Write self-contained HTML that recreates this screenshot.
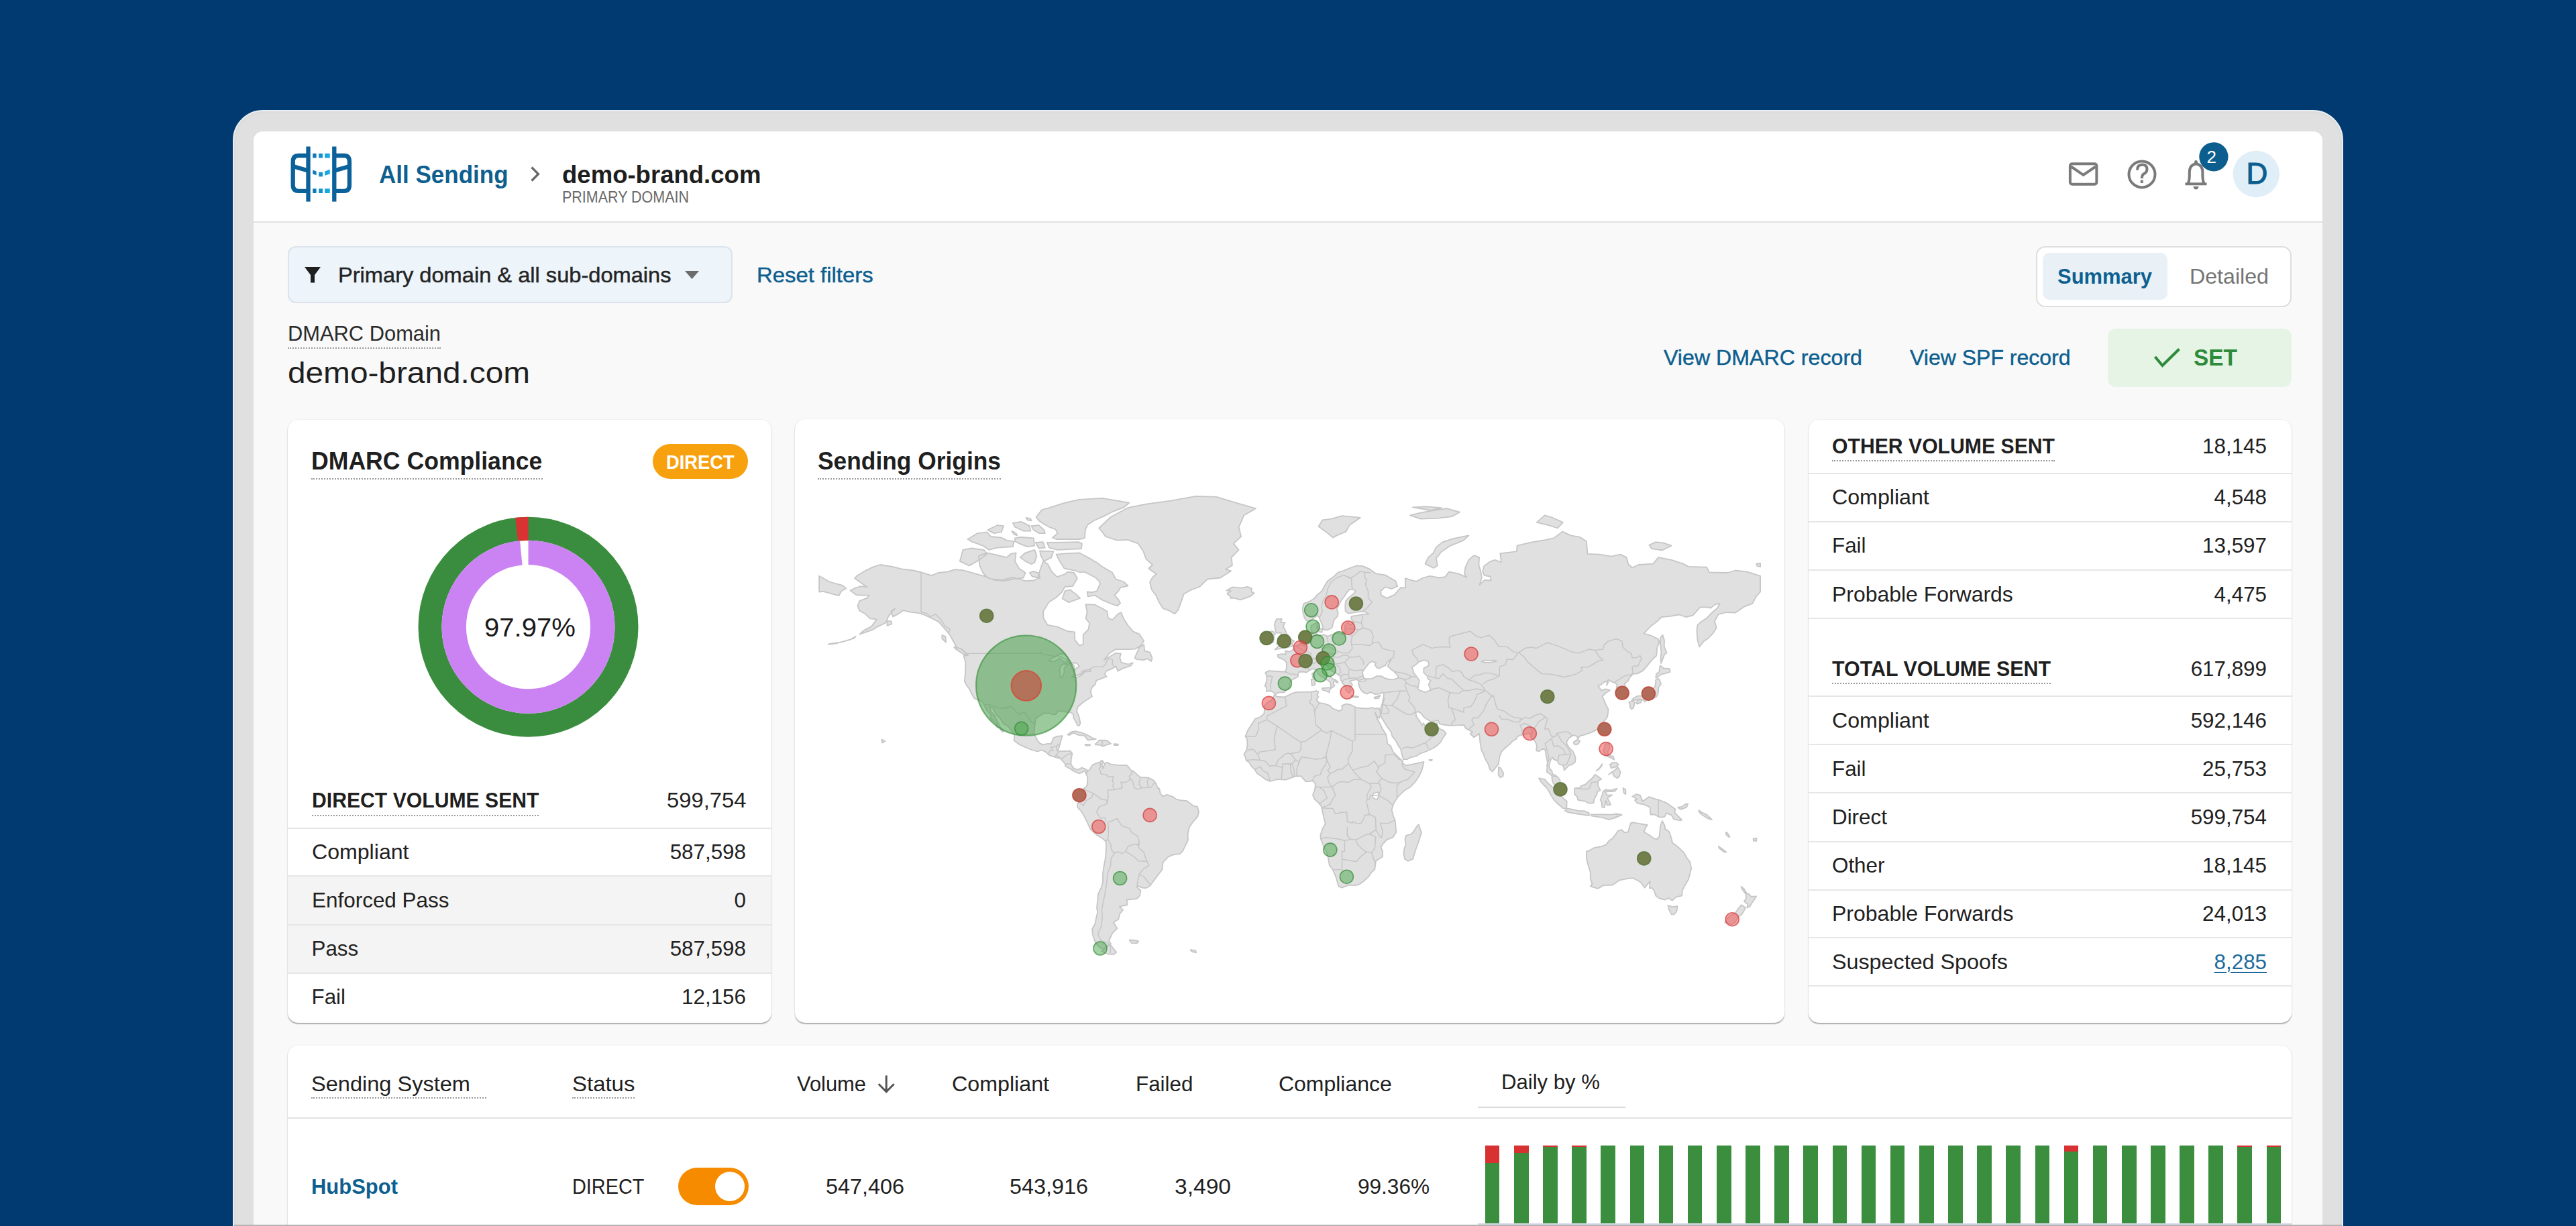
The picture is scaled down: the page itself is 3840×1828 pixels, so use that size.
<!DOCTYPE html>
<html><head><meta charset="utf-8"><style>
html,body{margin:0;padding:0}
body{width:3840px;height:1828px;overflow:hidden;position:relative;background:#003a70;font-family:"Liberation Sans",sans-serif}
.a{position:absolute;box-sizing:border-box}
.t{position:absolute;white-space:nowrap;line-height:0;transform-origin:0 0;font-family:"Liberation Sans",sans-serif}
.dot{position:absolute;height:0;border-top:2px dotted #9a9a9a}
.card{position:absolute;background:#fff;border-radius:15px;box-shadow:0 1.5px 1.5px rgba(0,0,0,.3),0 0 2px rgba(0,0,0,.08)}
.sep{position:absolute;height:2px;background:#e6e6e6}

</style></head><body>
<div class="a" style="left:346.5px;top:164px;width:3146.5px;height:1800px;background:#e0e0e0;border-radius:45px;border:2px solid #e9edf2;box-shadow:inset 0 0 0 3px #dcdcdc"></div>
<div class="a" style="left:378px;top:195.5px;width:3084px;height:1700px;background:#f9f9f9;border-radius:14px 14px 0 0"></div>
<div class="a" style="left:378px;top:195.5px;width:3084px;height:136.5px;background:#fff;border-radius:14px 14px 0 0;border-bottom:2px solid #e2e2e2"></div>
<!-- logo -->
<svg class="a" style="left:420px;top:205px" width="120" height="110" viewBox="420 205 120 110">
 <g fill="none" stroke="#0b6199" stroke-width="6.3">
  <line x1="459.5" y1="218.5" x2="459.5" y2="300.6"/>
  <line x1="498.3" y1="218.5" x2="498.3" y2="300.6"/>
  <path d="M459.5 232 H445 Q436.7 232 436.7 241 V276 Q436.7 284.8 445 284.8 H459.5"/>
  <path d="M498.3 232 H513 Q520.9 232 520.9 241 V276 Q520.9 284.8 513 284.8 H498.3"/>
  <path d="M437 248 L459.5 254.5"/>
  <path d="M498.3 254.5 L520.9 248"/>
 </g>
 <defs><linearGradient id="lg" x1="466" x2="492" y1="0" y2="0" gradientUnits="userSpaceOnUse"><stop offset="0" stop-color="#0d73b3"/><stop offset="1" stop-color="#17b2ea"/></linearGradient></defs>
 <g fill="url(#lg)">
  <rect x="466.2" y="228.8" width="5.4" height="6.7"/><rect x="475.2" y="228.8" width="5.8" height="6.7"/><rect x="484.2" y="228.8" width="7.6" height="6.7"/>
  <rect x="466.2" y="281.3" width="5.4" height="6.7"/><rect x="475.2" y="281.3" width="5.8" height="6.7"/><rect x="484.2" y="281.3" width="7.6" height="6.7"/>
  <path d="M466.2 253.5 L471.6 255.5 V261.3 L466.2 259.3Z"/>
  <path d="M475.2 256.7 L481 256.7 V263.3 L475.2 263.3Z"/>
  <path d="M484.2 255.5 L491.8 252.6 V259.3 L484.2 261.8Z"/>
 </g>
</svg>
<!-- chevron -->
<svg class="a" style="left:785px;top:240px" width="30" height="40" viewBox="785 240 30 40">
 <path d="M792.5 249.5 L802.5 259.5 L792.5 269.5" fill="none" stroke="#666" stroke-width="3.2"/>
</svg>
<!-- header icons -->
<svg class="a" style="left:3070px;top:205px" width="350" height="100" viewBox="3070 205 350 100">
 <g fill="none" stroke="#7a7a7a" stroke-width="4">
  <rect x="3085.9" y="244.3" width="39.5" height="30.4" rx="3"/>
  <path d="M3087.5 248.5 L3105.6 260.8 L3123.8 248.5"/>
  <circle cx="3193" cy="259.9" r="19.5"/>
  <path d="M3186 253.5 Q3186 245.5 3193.5 245.5 Q3200.5 245.5 3200.5 252.5 Q3200.5 257 3195.5 259.5 Q3192.8 261.2 3192.8 266"/>
  <path d="M3257.5 274.3 H3289.5 M3261.2 274.3 Q3263.8 270 3263.8 262 V257 Q3263.8 245.5 3273.6 244.2 Q3283.4 245.5 3283.4 257 V262 Q3283.4 270 3286 274.3"/>
 </g>
 <rect x="3190.8" y="268.5" width="4" height="4.5" fill="#7a7a7a"/>
 <path d="M3269.5 278 H3277.5 Q3277 282.5 3273.5 282.5 Q3270 282.5 3269.5 278Z" fill="#7a7a7a"/>
 <circle cx="3273.5" cy="241.5" r="2.5" fill="#7a7a7a"/>
 <circle cx="3299.9" cy="233.8" r="21.6" fill="#0b5e8e"/>
 <circle cx="3363.3" cy="259.5" r="34.7" fill="#e0eef7"/>
</svg>
<span class="t" style="left:3289.5px;top:233.8px;font-size:26px;color:#fff;transform:none;line-height:0">2</span>
<span class="t" style="left:3348.5px;top:259px;font-size:44px;color:#0b5e8e;transform:none;line-height:0;-webkit-text-stroke:1.1px #0b5e8e">D</span>
<!-- filter box -->
<div class="a" style="left:429px;top:366.5px;width:663px;height:85.5px;background:#edf4fa;border:2px solid #dbe4ec;border-radius:12px"></div>
<svg class="a" style="left:440px;top:390px" width="50" height="40" viewBox="440 390 50 40">
 <path d="M454 398 H478 L469 410 V421.6 H463 V410 Z" fill="#1f1f1f"/>
</svg>
<svg class="a" style="left:1015px;top:398px" width="35" height="25" viewBox="1015 398 35 25">
 <path d="M1021 404 H1042 L1031.5 416 Z" fill="#6b6b6b"/>
</svg>
<!-- toggle group -->
<div class="a" style="left:3034.6px;top:367px;width:381px;height:91px;background:#fff;border:2px solid #dedede;border-radius:14px"></div>
<div class="a" style="left:3045px;top:377px;width:186px;height:70px;background:#e9f1f7;border-radius:10px"></div>
<!-- SET -->
<div class="a" style="left:3141.5px;top:490px;width:274px;height:86.5px;background:#e6f4e6;border-radius:12px"></div>
<svg class="a" style="left:3200px;top:510px" width="60" height="45" viewBox="3200 510 60 45">
 <path d="M3212.5 532 L3223.5 545 L3248.5 520.5" fill="none" stroke="#2e8b3b" stroke-width="4.2"/>
</svg>
<!-- dotted underlines -->
<div class="dot" style="left:429px;top:518px;width:228px"></div>
<!-- cards -->
<div class="card" style="left:428.5px;top:625.5px;width:721px;height:899px"></div>
<div class="card" style="left:1185px;top:625px;width:1475px;height:899.5px"></div>
<div class="card" style="left:2696px;top:626px;width:720px;height:898.5px"></div>
<div class="card" style="left:428.5px;top:1559px;width:2987.5px;height:400px"></div>
<div class="dot" style="left:463.5px;top:713px;width:345px"></div>
<div class="dot" style="left:1219px;top:713px;width:273px"></div>
<!-- DIRECT badge -->
<div class="a" style="left:973.4px;top:662px;width:141.2px;height:52px;background:#f8a10f;border-radius:26px"></div>
<!-- donut -->
<svg class="a" style="left:600px;top:750px" width="380" height="370" viewBox="600 750 380 370">
 <circle cx="787.5" cy="934.7" r="146.5" fill="none" stroke="#3a8d3e" stroke-width="35"/>
 <path d="M787.5 770.7 L787.5 805.7 L772.0 806.6 L768.2 771.8 Z" fill="#d83232"/>
 <g transform="rotate(-90 787.5 934.7)"><circle cx="787.5" cy="934.7" r="110.8" fill="none" stroke="#cb83f4" stroke-width="36.4" stroke-dasharray="684.6 11.6"/></g>
</svg>
<!-- dmarc rows -->
<div class="a" style="left:428.5px;top:1306px;width:721px;height:145px;background:#f4f4f4"></div>
<div class="sep" style="left:428.5px;top:1234px;width:721px"></div>
<div class="sep" style="left:428.5px;top:1305px;width:721px"></div>
<div class="sep" style="left:428.5px;top:1377.5px;width:721px"></div>
<div class="sep" style="left:428.5px;top:1450px;width:721px"></div>
<div class="dot" style="left:464.5px;top:1215px;width:338.5px"></div>
<!-- right card separators -->
<div class="sep" style="left:2696px;top:705px;width:720px"></div>
<div class="sep" style="left:2696px;top:777px;width:720px"></div>
<div class="sep" style="left:2696px;top:849px;width:720px"></div>
<div class="sep" style="left:2696px;top:921px;width:720px"></div>
<div class="sep" style="left:2696px;top:1036.5px;width:720px"></div>
<div class="sep" style="left:2696px;top:1109px;width:720px"></div>
<div class="sep" style="left:2696px;top:1181px;width:720px"></div>
<div class="sep" style="left:2696px;top:1253.5px;width:720px"></div>
<div class="sep" style="left:2696px;top:1325.5px;width:720px"></div>
<div class="sep" style="left:2696px;top:1397px;width:720px"></div>
<div class="sep" style="left:2696px;top:1469px;width:720px"></div>
<div class="dot" style="left:2731px;top:685.5px;width:332px"></div>
<div class="dot" style="left:2731px;top:1017.5px;width:326px"></div>
<!-- map -->
<svg class="a" style="left:1200px;top:720px" width="1440" height="730" viewBox="1200 720 1440 730">
<path d="M1267.5 880.6L1274.9 876.7L1283.5 874.1L1292.5 875.4L1284.3 869.5L1274.1 862.2L1277.3 858.8L1289.3 851.2L1301.0 845.6L1311.6 842.0L1330.3 844.9L1343.9 848.4L1361.4 850.5L1373.1 853.3L1388.7 858.1L1398.5 854.0L1412.1 852.6L1423.8 849.1L1436.6 850.5L1451.1 854.7L1466.7 858.8L1478.3 863.5L1493.9 864.9L1509.5 860.8L1529.0 866.2L1540.7 865.5L1546.5 862.8L1550.4 849.8L1555.1 836.9L1562.1 841.3L1568.0 852.6L1575.8 860.1L1587.5 856.0L1591.4 852.6L1601.1 854.0L1605.8 862.2L1599.1 874.1L1587.5 874.8L1582.8 883.1L1573.8 891.3L1563.3 898.1L1555.1 911.8L1555.5 921.7L1561.7 931.9L1576.5 934.6L1591.4 941.2L1601.9 942.3L1602.3 954.1L1608.9 962.4L1614.7 960.9L1614.7 946.1L1622.5 938.5L1624.1 929.1L1618.6 922.3L1620.6 912.4L1618.2 901.1L1632.3 901.7L1644.0 907.7L1650.6 911.8L1651.8 921.7L1658.4 924.0L1666.2 915.9L1671.2 913.0L1675.1 922.8L1681.8 933.0L1688.8 941.2L1698.5 945.6L1705.1 955.7L1701.3 961.9L1692.7 967.6L1681.0 968.1L1663.4 968.1L1654.5 973.2L1645.9 984.1L1663.4 973.7L1670.9 974.7L1669.3 980.2L1671.2 987.6L1681.8 990.5L1688.8 988.0L1686.1 992.4L1674.8 996.3L1666.2 1000.6L1663.8 993.4L1658.4 996.7L1649.0 1000.6L1646.7 1005.8L1649.8 1009.0L1644.0 1010.9L1634.2 1014.6L1632.7 1020.6L1628.4 1024.2L1625.6 1030.6L1628.0 1038.6L1620.6 1043.0L1614.0 1047.8L1606.9 1053.5L1605.0 1060.3L1608.5 1068.4L1610.5 1078.5L1608.9 1081.8L1606.6 1082.2L1603.8 1076.4L1600.3 1070.5L1599.9 1065.0L1596.0 1062.0L1589.4 1061.6L1581.6 1060.3L1577.7 1059.9L1573.8 1065.0L1569.9 1065.5L1564.1 1063.3L1556.3 1063.3L1550.4 1067.1L1543.8 1071.4L1543.0 1078.5L1541.9 1086.8L1541.5 1094.2L1546.5 1104.0L1550.4 1108.4L1554.3 1110.4L1562.1 1108.8L1566.8 1109.2L1570.3 1100.3L1575.8 1097.9L1583.6 1097.1L1581.2 1105.2L1578.9 1113.7L1576.5 1119.7L1585.5 1120.1L1595.3 1119.7L1598.4 1123.3L1596.8 1131.2L1596.4 1139.1L1599.9 1145.0L1606.2 1147.8L1612.8 1144.6L1619.4 1147.4L1621.8 1149.4L1619.0 1154.1L1617.1 1149.4L1609.3 1153.3L1601.1 1150.1L1596.4 1147.0L1588.2 1142.3L1587.5 1138.3L1580.8 1131.2L1573.4 1129.2L1564.9 1126.5L1558.2 1120.9L1553.2 1118.5L1546.5 1120.5L1538.7 1118.5L1529.0 1114.5L1519.3 1110.0L1511.5 1104.0L1512.2 1096.2L1509.5 1091.7L1501.7 1081.8L1495.9 1079.3L1490.8 1071.0L1485.0 1065.9L1481.1 1056.5L1475.2 1053.9L1476.4 1059.5L1482.2 1067.1L1485.4 1073.5L1488.1 1077.7L1492.0 1085.6L1496.3 1090.1L1493.9 1091.3L1490.0 1085.6L1485.4 1083.1L1485.4 1078.1L1481.5 1075.2L1476.8 1071.0L1477.2 1066.3L1471.3 1059.5L1467.4 1052.2L1465.5 1047.8L1460.8 1044.3L1452.6 1041.7L1447.6 1032.8L1445.2 1027.4L1440.9 1022.0L1437.8 1015.6L1439.0 1003.4L1439.4 988.0L1436.6 977.7L1443.3 977.2L1435.5 969.1L1425.7 965.0L1421.8 957.2L1415.2 945.6L1408.2 937.4L1399.6 927.4L1390.7 922.8L1379.0 917.1L1369.2 914.2L1355.6 912.4L1346.6 910.1L1338.0 915.9L1331.0 919.4L1328.3 911.8L1334.2 907.1L1324.4 918.8L1320.5 928.5L1308.8 934.1L1301.0 939.0L1291.3 942.3L1281.5 945.6L1287.4 940.1L1299.1 934.1L1306.9 923.4L1297.1 922.3L1290.1 915.3L1281.2 910.7L1278.4 903.5L1281.2 896.2L1293.2 891.3L1295.2 887.6L1285.4 887.6L1276.5 886.9L1267.5 880.6ZM1638.1 787.5L1655.7 771.0L1681.0 757.2L1708.3 751.6L1743.3 746.8L1782.3 739.9L1813.5 740.9L1838.8 748.7L1871.9 758.2L1854.4 768.3L1846.6 785.8L1850.1 800.0L1838.8 810.4L1846.6 819.8L1835.7 831.1L1836.9 842.7L1827.1 849.1L1834.9 851.2L1819.3 861.5L1799.8 863.5L1788.2 874.8L1774.5 879.9L1764.8 885.7L1760.9 896.9L1755.8 910.1L1751.1 915.3L1743.3 910.7L1733.6 907.1L1727.8 898.1L1723.9 888.8L1716.8 879.3L1714.1 868.2L1718.0 860.8L1723.9 856.0L1712.2 847.7L1718.0 842.0L1708.3 833.3L1704.4 822.1L1696.6 810.4L1681.0 804.9L1665.4 805.7L1647.9 800.0L1644.0 794.2L1638.1 787.5ZM1681.4 873.5L1675.1 867.5L1663.4 863.5L1657.6 853.3L1644.0 845.6L1636.2 839.8L1624.5 832.6L1608.9 824.3L1591.4 825.1L1574.6 826.6L1578.9 835.5L1586.7 847.7L1601.5 850.5L1610.1 853.3L1616.7 852.6L1624.5 856.7L1632.3 860.8L1638.1 866.2L1640.1 870.2L1635.0 881.2L1628.4 883.1L1620.6 882.5L1621.8 889.4L1632.3 887.6L1642.8 894.4L1655.7 899.9L1665.4 903.5L1670.1 899.3L1667.3 893.8L1661.5 887.6L1667.3 881.2L1670.1 876.1L1681.4 873.5ZM1458.9 828.8L1471.3 824.3L1485.0 827.3L1500.6 831.1L1506.8 825.8L1514.6 824.3L1513.0 836.9L1519.3 847.7L1528.6 854.0L1525.5 861.5L1509.9 863.5L1497.4 866.2L1481.8 864.9L1472.5 861.5L1465.1 854.0L1460.4 843.4ZM1430.8 836.9L1435.5 819.8L1447.9 817.5L1466.7 819.8L1471.3 825.8L1458.9 835.5L1444.8 843.4ZM1544.6 771.0L1553.2 760.0L1564.1 757.2L1587.5 749.7L1608.9 744.8L1643.2 742.9L1683.3 749.7L1675.5 756.3L1658.8 762.8L1644.7 770.1L1630.7 776.3L1621.4 782.4L1618.2 789.2L1616.7 802.4L1608.9 804.0L1575.0 804.0L1568.8 801.6L1576.5 795.1L1573.4 789.2L1564.1 785.8L1556.3 781.5L1548.5 776.3ZM1561.0 808.8L1575.0 808.8L1607.3 808.1L1612.8 810.4L1612.0 818.2L1576.5 819.8L1564.1 816.7ZM1550.0 821.3L1570.3 822.1L1567.2 831.1L1556.3 836.9L1551.6 828.8ZM1520.8 831.1L1528.6 824.3L1542.3 819.8L1545.4 828.8L1542.3 838.4L1537.6 841.3L1528.6 836.9ZM1442.5 804.0L1457.3 795.1L1471.3 793.4L1477.2 800.0L1492.8 801.6L1500.6 805.7L1511.5 807.3L1509.9 815.1L1486.5 816.7L1474.1 819.8L1465.1 813.6L1447.9 807.3ZM1472.5 790.1L1486.5 783.2L1495.9 784.1L1492.8 793.4L1481.8 795.1ZM1513.0 802.4L1520.8 800.8L1531.7 801.6L1540.7 802.4L1542.3 813.6L1531.7 815.1L1519.3 810.4L1513.0 807.3ZM1543.8 808.8L1554.7 808.1L1557.8 816.7L1548.5 817.5ZM1509.9 779.8L1522.4 778.0L1534.8 784.1L1536.4 791.7L1525.5 791.7L1513.0 785.8ZM1537.6 784.1L1548.5 783.2L1556.3 790.1L1557.8 795.1L1548.5 795.1L1540.7 790.1ZM1529.4 771.9L1536.4 773.6L1537.6 776.3L1531.7 775.4ZM1508.3 791.7L1514.6 795.1L1516.1 798.4L1511.5 796.7ZM1610.1 891.9L1593.3 898.1L1583.6 892.5L1587.5 881.2L1595.3 879.3L1605.0 886.9ZM1550.4 862.2L1538.7 859.5L1534.8 854.0L1540.7 851.9L1548.5 854.7ZM1691.5 981.2L1698.5 965.0L1705.1 960.9L1706.3 970.6L1714.1 972.7L1717.6 981.2L1716.1 986.1L1710.2 982.1L1704.4 984.1L1694.6 983.1ZM1591.5 1095.5L1597.2 1091.3L1603.0 1090.1L1612.8 1092.6L1620.6 1095.8L1628.4 1100.3L1633.7 1102.2L1621.8 1103.6L1616.7 1097.1L1606.9 1095.8L1599.9 1092.6L1594.1 1096.2ZM1632.5 1109.6L1638.9 1103.6L1649.8 1104.0L1656.0 1108.8L1649.8 1110.4L1644.0 1112.9L1640.1 1110.8L1633.1 1110.4ZM1617.5 1110.0L1625.3 1110.4L1624.5 1111.7L1618.6 1111.7ZM1660.7 1109.2L1667.0 1109.6L1666.6 1111.2L1660.7 1111.2ZM1621.8 1149.4L1623.7 1148.2L1628.0 1141.1L1633.4 1138.3L1640.1 1136.0L1642.4 1133.6L1645.1 1136.4L1642.4 1139.9L1644.0 1146.2L1647.1 1137.9L1650.6 1136.8L1656.4 1139.9L1665.4 1140.7L1673.2 1141.1L1679.0 1140.7L1681.8 1143.1L1685.7 1148.6L1689.6 1149.8L1695.8 1155.6L1699.7 1158.8L1706.3 1159.2L1712.6 1159.9L1720.0 1163.9L1723.1 1168.2L1725.8 1174.8L1728.1 1175.6L1729.7 1183.0L1733.6 1187.3L1739.4 1184.9L1749.2 1188.4L1753.1 1191.6L1760.9 1193.5L1768.7 1193.9L1772.6 1196.6L1778.4 1201.3L1785.0 1202.9L1787.0 1210.3L1785.4 1217.4L1778.4 1225.3L1772.6 1234.0L1770.6 1243.1L1771.0 1252.3L1767.9 1259.2L1763.2 1268.6L1758.9 1273.1L1749.2 1274.3L1741.4 1277.6L1733.6 1285.9L1732.4 1296.8L1725.4 1305.8L1718.0 1315.7L1714.1 1321.0L1708.7 1324.0L1702.4 1323.6L1695.4 1320.5L1695.0 1322.7L1700.5 1328.0L1698.9 1335.6L1694.6 1340.2L1679.8 1341.5L1680.2 1349.3L1668.9 1351.6L1674.0 1356.8L1669.3 1362.4L1667.3 1370.5L1659.9 1375.4L1665.4 1384.2L1658.4 1391.2L1655.7 1396.8L1652.9 1403.0L1656.0 1407.2L1651.8 1408.7L1645.9 1415.1L1640.1 1413.5L1633.4 1406.6L1629.2 1395.3L1628.0 1385.2L1632.3 1377.8L1634.2 1368.1L1636.2 1360.0L1635.0 1354.0L1636.2 1342.4L1636.9 1333.4L1641.2 1324.5L1644.0 1315.7L1644.0 1302.8L1645.1 1294.3L1647.5 1281.7L1648.3 1273.5L1649.0 1263.3L1648.6 1254.8L1644.0 1250.7L1635.0 1245.1L1625.3 1236.4L1621.8 1228.4L1615.5 1215.4L1611.6 1209.5L1606.2 1203.7L1605.8 1199.0L1609.7 1195.5L1611.6 1192.3L1607.3 1189.2L1608.9 1183.8L1610.8 1178.7L1615.1 1176.3L1620.2 1172.1L1621.0 1166.2L1621.4 1158.8L1619.0 1154.1ZM1655.3 1408.7L1664.2 1419.9L1659.6 1423.2L1651.8 1422.6L1642.0 1418.3L1647.9 1413.0ZM1899.6 1036.4L1905.1 1039.0L1914.8 1039.5L1926.5 1033.7L1934.3 1031.9L1944.0 1031.9L1955.7 1031.5L1962.3 1030.1L1965.5 1031.5L1963.5 1036.4L1965.5 1039.0L1962.3 1043.4L1966.2 1047.8L1974.0 1049.1L1982.2 1052.2L1986.9 1056.5L1996.6 1060.3L2000.9 1057.3L2000.2 1052.2L2006.4 1049.6L2012.2 1050.4L2018.1 1053.0L2020.8 1054.8L2029.8 1056.0L2039.1 1056.5L2045.4 1055.2L2048.5 1056.5L2055.9 1056.0L2058.6 1063.8L2055.9 1071.0L2053.1 1068.8L2049.6 1062.0L2053.1 1072.2L2057.0 1078.5L2060.9 1086.8L2066.0 1095.0L2067.6 1103.2L2068.3 1109.2L2073.0 1112.1L2076.5 1120.9L2082.4 1126.9L2087.4 1131.6L2091.3 1135.6L2090.2 1137.9L2096.4 1141.5L2103.8 1139.9L2113.6 1137.9L2122.5 1136.0L2121.3 1141.5L2119.4 1149.0L2115.5 1156.8L2109.7 1165.8L2102.6 1173.2L2094.1 1178.3L2086.3 1185.3L2081.6 1191.2L2076.9 1199.4L2074.6 1207.6L2076.5 1215.4L2079.6 1223.3L2080.4 1231.2L2081.2 1241.1L2076.5 1248.3L2066.8 1252.3L2060.9 1259.2L2058.6 1263.3L2060.9 1269.4L2060.9 1277.6L2051.2 1283.4L2050.4 1288.0L2049.3 1296.4L2044.2 1301.1L2039.5 1307.9L2031.7 1314.8L2025.9 1318.8L2020.0 1320.1L2010.3 1319.6L2000.5 1323.6L1995.1 1321.4L1993.9 1316.6L1992.0 1309.2L1986.9 1296.8L1981.8 1290.1L1980.3 1281.7L1978.7 1272.7L1974.0 1263.3L1968.6 1250.3L1968.6 1244.3L1971.7 1235.2L1975.6 1228.4L1973.7 1220.1L1970.5 1206.0L1969.4 1201.7L1965.9 1197.4L1959.6 1191.6L1956.9 1185.3L1959.2 1180.2L1960.8 1172.4L1960.4 1167.4L1956.5 1164.2L1951.8 1165.0L1946.8 1165.4L1942.1 1160.3L1939.0 1157.2L1930.4 1157.6L1926.5 1159.2L1916.8 1162.7L1910.9 1162.3L1905.1 1161.9L1893.4 1165.0L1887.5 1162.7L1880.5 1157.6L1873.9 1153.3L1870.8 1147.8L1864.9 1141.9L1862.6 1137.2L1857.5 1133.6L1856.7 1129.2L1854.4 1124.5L1858.3 1118.5L1859.5 1111.2L1859.1 1102.4L1856.4 1097.9L1860.2 1088.9L1866.1 1079.7L1871.2 1071.8L1878.2 1069.3L1884.4 1063.8L1884.8 1059.1L1884.4 1053.0L1889.1 1047.4L1895.7 1043.9L1898.4 1039.0ZM2114.7 1229.2L2119.0 1241.9L2116.7 1248.3L2114.7 1255.2L2111.6 1263.3L2108.9 1271.4L2106.1 1280.9L2098.7 1283.8L2094.1 1280.9L2092.5 1273.5L2093.3 1265.3L2095.6 1259.2L2094.5 1251.1L2096.0 1245.9L2103.8 1243.5L2107.7 1239.1L2110.4 1234.4ZM1900.8 1035.5L1898.0 1031.9L1893.4 1030.1L1887.9 1031.0L1888.3 1025.2L1885.6 1022.9L1888.3 1015.1L1888.3 1008.1L1886.4 1002.9L1891.4 1000.1L1903.1 1001.0L1910.9 1001.5L1916.4 1001.5L1917.9 995.3L1917.9 988.0L1914.0 983.6L1905.5 980.2L1904.3 976.2L1910.9 975.2L1916.8 975.7L1916.0 970.6L1923.4 971.6L1928.8 967.6L1929.2 964.0L1935.1 961.9L1939.7 957.8L1941.7 953.0L1949.1 950.9L1955.7 950.4L1956.9 945.6L1954.6 940.1L1954.2 933.0L1963.9 927.9L1962.7 936.3L1965.1 940.1L1961.6 943.4L1965.5 948.2L1973.3 946.1L1979.1 948.8L1986.9 945.6L1994.7 943.9L1998.6 946.1L2005.2 941.8L2004.4 933.0L2008.3 928.5L2014.2 931.9L2017.7 927.4L2014.2 922.8L2014.6 918.8L2023.9 917.7L2033.7 915.9L2040.3 915.3L2033.7 911.8L2023.9 912.4L2010.3 914.8L2005.6 911.2L2005.2 904.1L2006.0 896.2L2010.3 891.3L2017.3 885.7L2020.8 881.9L2018.5 879.3L2012.2 878.7L2008.3 882.5L2004.4 888.8L1999.8 894.4L1996.3 901.1L1992.7 908.9L1994.7 913.6L1993.9 918.8L1988.8 924.0L1986.9 930.7L1985.7 935.7L1979.1 939.6L1972.5 938.5L1971.3 931.9L1968.2 925.1L1966.2 920.0L1963.5 917.7L1959.6 920.5L1953.8 925.7L1947.9 925.7L1944.4 921.1L1942.1 912.4L1942.1 905.3L1943.6 899.9L1951.8 896.9L1959.6 891.9L1963.5 886.9L1970.5 881.2L1975.2 872.8L1979.1 866.2L1986.9 860.8L1994.7 853.3L2002.5 851.2L2012.2 847.0L2023.1 843.4L2031.7 844.1L2041.5 848.4L2051.2 855.4L2064.8 857.4L2080.4 866.2L2083.2 874.1L2074.6 878.0L2064.8 875.4L2058.2 881.2L2059.0 887.6L2067.6 891.9L2078.5 886.9L2088.2 876.1L2094.8 876.7L2094.8 862.2L2103.0 864.9L2111.6 866.9L2121.3 861.5L2131.9 858.8L2144.7 861.5L2154.5 860.1L2159.9 852.6L2174.0 855.4L2186.4 860.8L2182.9 855.4L2184.5 845.6L2189.5 834.8L2197.3 828.1L2205.1 831.1L2204.4 842.7L2207.1 851.2L2209.0 860.8L2205.5 872.2L2212.9 864.9L2222.7 865.5L2221.5 859.5L2212.9 858.1L2210.2 852.6L2212.1 844.1L2220.7 837.7L2228.5 834.8L2237.9 838.4L2236.3 825.1L2249.9 823.6L2260.9 822.1L2261.6 813.6L2281.1 808.8L2304.5 804.9L2316.2 802.4L2329.1 792.6L2341.5 798.4L2355.2 800.8L2364.9 807.3L2366.5 825.8L2384.4 826.6L2401.9 829.6L2415.6 826.6L2424.5 831.1L2427.3 841.3L2433.1 846.3L2442.8 842.0L2464.3 840.6L2472.1 831.1L2491.6 834.8L2509.1 840.6L2516.9 844.9L2544.2 845.6L2548.1 853.3L2575.3 854.0L2587.0 850.5L2604.6 852.6L2624.1 858.8L2624.1 882.5L2618.2 888.8L2612.4 899.9L2599.9 904.7L2587.0 913.6L2573.4 913.0L2561.7 915.9L2555.9 926.2L2558.6 936.3L2553.9 943.9L2546.1 952.0L2540.3 955.7L2533.3 964.5L2530.5 954.6L2529.4 940.1L2530.5 931.9L2536.4 926.8L2544.2 921.7L2552.7 913.0L2560.1 906.5L2563.7 899.9L2557.0 901.1L2550.0 906.5L2544.2 905.3L2534.4 905.3L2523.5 917.7L2513.0 920.0L2503.3 916.5L2489.6 918.8L2476.8 920.0L2470.5 926.2L2460.4 934.1L2450.6 944.5L2462.3 948.2L2471.3 952.5L2473.6 957.2L2470.1 966.0L2469.3 977.7L2462.3 984.1L2456.5 991.4L2449.5 999.6L2440.9 1004.4L2434.3 1004.8L2429.2 1010.4L2427.7 1014.2L2421.4 1019.7L2426.1 1028.8L2426.9 1036.4L2426.1 1039.5L2419.5 1041.7L2415.6 1042.6L2414.8 1036.4L2416.3 1031.0L2414.0 1027.4L2409.7 1025.6L2410.5 1020.6L2407.4 1018.3L2400.0 1015.1L2397.3 1013.2L2394.9 1022.0L2397.6 1016.9L2392.2 1016.0L2386.3 1021.1L2382.4 1022.4L2387.1 1029.7L2393.4 1027.4L2400.0 1029.2L2394.1 1032.8L2388.3 1038.6L2391.0 1043.4L2393.7 1050.4L2397.6 1057.8L2396.9 1063.8L2396.1 1068.8L2391.4 1075.2L2388.3 1080.6L2384.4 1084.3L2378.5 1088.9L2371.9 1092.1L2366.9 1093.8L2361.0 1095.8L2355.2 1097.1L2352.4 1101.5L2350.1 1097.5L2345.4 1096.2L2338.4 1100.7L2334.9 1107.2L2338.4 1114.1L2345.4 1121.3L2348.5 1129.2L2348.2 1136.0L2343.5 1139.9L2338.4 1141.5L2331.8 1148.6L2331.0 1143.9L2329.8 1141.1L2324.0 1139.5L2321.7 1134.4L2316.2 1132.4L2314.2 1129.2L2311.9 1132.0L2309.2 1141.1L2310.4 1146.2L2313.5 1149.8L2314.2 1154.1L2318.1 1155.6L2321.3 1158.0L2325.5 1163.1L2325.9 1170.5L2329.1 1176.0L2325.9 1177.1L2322.0 1174.8L2317.8 1171.3L2315.0 1167.0L2313.5 1161.1L2313.5 1156.8L2309.6 1153.3L2305.7 1150.9L2306.5 1143.9L2306.8 1136.0L2304.5 1125.3L2303.3 1117.3L2298.7 1116.9L2294.4 1120.1L2290.1 1119.3L2290.9 1111.7L2288.9 1106.4L2286.2 1102.4L2282.3 1099.9L2280.3 1093.0L2275.3 1094.2L2271.4 1095.8L2267.5 1095.8L2261.6 1098.3L2260.9 1101.5L2254.6 1105.2L2249.9 1110.4L2243.3 1115.7L2238.6 1120.5L2235.1 1129.2L2234.0 1139.1L2231.2 1142.3L2227.3 1147.4L2224.6 1150.5L2221.1 1147.4L2218.0 1138.3L2214.1 1132.0L2211.4 1124.1L2208.6 1119.3L2206.3 1106.4L2205.5 1097.5L2205.1 1093.8L2197.3 1099.5L2191.5 1093.8L2195.4 1091.3L2189.5 1088.4L2184.9 1086.0L2182.5 1081.0L2172.0 1081.4L2162.7 1081.8L2154.5 1081.0L2145.9 1079.3L2143.9 1073.9L2138.9 1075.2L2133.0 1076.0L2127.2 1072.2L2122.5 1069.3L2118.6 1063.8L2114.7 1061.2L2110.4 1062.0L2111.2 1068.0L2114.7 1073.1L2118.2 1077.7L2119.4 1081.8L2122.1 1078.1L2123.7 1081.4L2123.7 1085.6L2129.1 1086.0L2135.0 1085.6L2139.7 1080.6L2142.0 1077.2L2142.8 1083.5L2146.7 1087.2L2151.7 1088.9L2155.6 1093.4L2150.6 1101.1L2147.5 1106.4L2142.8 1111.2L2136.9 1115.3L2126.0 1120.5L2117.4 1123.3L2111.6 1127.2L2101.9 1129.6L2098.0 1132.0L2092.1 1132.4L2089.0 1122.1L2088.2 1117.3L2084.3 1111.2L2080.4 1104.0L2075.4 1097.9L2073.8 1091.7L2068.7 1084.7L2064.8 1078.5L2059.8 1070.5L2057.4 1063.8L2058.6 1055.6L2060.9 1047.4L2062.5 1039.5L2062.9 1033.3L2060.9 1032.4L2055.9 1034.6L2049.3 1035.0L2043.4 1031.9L2037.6 1034.6L2031.7 1031.9L2029.0 1028.8L2026.6 1024.7L2025.9 1020.6L2024.7 1016.9L2029.8 1015.6L2035.6 1015.1L2036.4 1012.3L2045.4 1011.8L2052.4 1008.1L2059.0 1008.1L2064.8 1011.4L2071.9 1013.2L2078.5 1012.8L2084.3 1010.9L2084.3 1008.1L2077.7 1001.0L2072.6 997.2L2068.3 992.9L2070.7 989.0L2073.8 983.1L2068.7 986.6L2064.8 992.4L2060.9 993.9L2057.0 996.3L2052.8 995.8L2049.6 991.4L2051.2 988.5L2045.4 986.1L2041.5 988.0L2038.0 992.4L2034.1 997.2L2030.9 1002.0L2031.7 1005.8L2032.5 1010.4L2035.6 1012.1L2029.8 1013.2L2025.1 1014.6L2022.0 1013.2L2016.9 1014.2L2012.2 1015.6L2016.1 1021.1L2012.2 1025.6L2014.2 1028.8L2011.5 1033.3L2008.3 1031.0L2005.6 1027.4L2006.4 1023.3L2002.1 1019.7L1998.6 1013.7L1998.6 1009.0L1994.7 1005.8L1988.8 1002.0L1984.2 999.6L1979.1 993.9L1975.6 990.5L1970.9 991.4L1970.5 996.3L1975.2 1000.6L1977.9 1006.2L1984.2 1009.0L1985.7 1011.8L1990.8 1013.7L1994.7 1016.9L1993.5 1018.3L1988.8 1015.1L1987.3 1018.8L1989.6 1022.0L1986.9 1024.7L1983.8 1026.5L1983.8 1022.4L1983.0 1017.4L1979.1 1014.2L1975.2 1011.4L1969.4 1008.6L1965.5 1005.3L1963.5 1002.0L1960.8 998.2L1956.1 997.2L1951.8 999.6L1947.9 1002.5L1942.1 1001.5L1936.2 1002.0L1934.7 1005.8L1935.1 1008.6L1930.4 1011.4L1925.7 1013.7L1922.6 1018.3L1921.4 1020.1L1923.4 1022.9L1920.3 1026.1L1919.1 1028.3L1915.6 1030.6L1914.0 1032.4L1909.0 1032.4L1905.1 1032.8ZM1900.4 968.6L1907.0 967.1L1912.9 966.0L1920.7 965.0L1928.1 963.0L1925.3 960.4L1929.2 955.7L1923.8 953.0L1923.0 950.4L1917.9 945.0L1916.0 939.6L1914.0 936.3L1912.9 933.0L1915.6 928.5L1909.0 927.9L1910.9 922.8L1903.1 922.8L1901.2 926.8L1900.0 931.9L1900.8 937.4L1902.3 942.9L1903.9 943.9L1909.4 943.4L1910.1 947.2L1911.3 951.4L1905.1 952.0L1906.2 954.6L1902.7 959.8L1909.0 961.4L1906.2 963.0ZM1898.0 957.8L1899.2 952.0L1898.4 947.7L1901.2 945.0L1898.4 941.8L1893.8 941.2L1889.9 943.4L1889.5 946.6L1883.6 947.2L1884.4 951.4L1882.5 957.8L1884.4 961.4L1889.5 960.9L1895.3 958.3ZM1834.9 890.1L1829.1 885.0L1834.9 881.2L1828.3 880.6L1836.9 875.4L1850.5 876.7L1859.5 874.8L1865.7 877.4L1865.7 882.5L1869.6 884.4L1864.1 888.8L1856.4 891.9L1848.6 894.4L1840.8 891.9L1834.1 891.9ZM1965.5 785.0L1971.3 775.4L1985.0 773.6L2000.5 769.2L2027.8 771.9L2012.2 782.4L2006.4 792.6L1992.7 798.4L1986.9 801.6L1977.2 793.4ZM2101.9 768.3L2117.4 764.6L2136.9 761.0L2156.4 758.2L2175.9 763.7L2164.2 770.1L2144.7 772.7L2117.4 773.6ZM2105.8 756.3L2125.2 755.4L2148.6 757.2L2133.0 761.0ZM2124.5 840.6L2129.1 831.1L2136.9 824.3L2140.8 815.9L2150.6 808.1L2166.2 803.2L2189.5 798.4L2181.8 805.7L2162.3 813.6L2148.6 822.8L2140.8 832.6L2142.8 843.4L2136.9 847.0ZM2290.9 778.9L2302.6 768.3L2312.3 771.0L2329.8 778.9L2322.0 787.5L2308.4 783.2ZM2458.4 812.8L2468.2 808.1L2479.9 809.6L2491.6 813.6L2477.9 820.5L2462.3 818.2ZM2618.2 840.6L2624.1 839.8L2624.1 844.9L2619.4 844.1ZM1221.1 858.8L1236.7 867.5L1248.4 870.8L1256.2 872.8L1261.3 877.4L1254.3 881.2L1250.4 888.2L1236.7 884.4L1227.0 881.9L1221.1 882.5ZM2478.3 946.6L2481.0 954.6L2480.7 964.0L2484.5 973.2L2481.0 976.2L2478.3 983.6L2476.0 989.0L2475.6 980.7L2476.4 971.6L2475.2 961.4L2474.8 952.0ZM2432.7 1043.4L2435.1 1041.2L2440.9 1037.7L2450.6 1037.3L2452.6 1033.3L2456.5 1030.1L2462.3 1028.8L2467.0 1024.2L2468.2 1018.3L2468.2 1013.7L2471.3 1011.4L2474.0 1013.7L2476.0 1019.7L2472.1 1025.6L2472.1 1031.0L2470.9 1036.4L2468.2 1039.9L2464.3 1040.8L2459.6 1041.7L2455.7 1043.0L2451.8 1046.5L2448.7 1043.0L2442.8 1042.6L2437.0 1044.3ZM2428.4 1047.4L2433.1 1044.8L2437.0 1047.8L2435.1 1055.2L2432.3 1057.3L2430.0 1055.2L2429.6 1050.0ZM2439.0 1047.8L2442.8 1043.0L2447.5 1043.4L2446.0 1047.4L2440.9 1049.6ZM2468.2 1010.4L2469.3 1004.4L2473.2 1002.0L2474.8 992.4L2479.9 996.3L2488.8 997.2L2489.6 1002.0L2483.0 1003.9L2475.2 1005.8L2471.7 1009.0ZM2396.1 1081.4L2398.0 1084.7L2395.7 1091.7L2393.4 1095.4L2391.0 1091.7L2390.6 1087.6L2394.1 1082.7ZM2345.8 1106.4L2351.3 1102.8L2355.2 1104.8L2352.8 1109.2L2349.3 1110.4L2346.2 1109.2ZM2392.6 1109.2L2398.8 1109.2L2399.6 1115.3L2396.5 1121.3L2398.0 1126.5L2405.0 1128.0L2406.2 1132.8L2402.7 1130.8L2396.5 1128.0L2392.6 1126.1L2390.2 1120.1L2391.4 1116.1ZM2398.0 1154.9L2403.1 1150.9L2406.6 1149.0L2411.7 1143.9L2415.6 1150.9L2414.0 1157.6L2410.9 1160.3L2405.8 1157.2L2403.9 1151.7L2400.0 1153.3ZM2400.0 1139.9L2403.9 1137.2L2409.7 1137.2L2412.5 1139.9L2409.7 1143.1L2405.8 1144.3L2401.5 1145.0ZM2379.7 1149.4L2384.4 1145.0L2388.3 1139.1L2387.5 1142.3L2382.4 1147.8ZM2347.4 1175.2L2353.2 1175.6L2358.3 1171.3L2363.7 1169.3L2368.8 1164.2L2373.1 1160.7L2377.8 1154.9L2381.7 1157.6L2387.1 1161.5L2382.4 1164.6L2381.7 1170.5L2385.6 1178.3L2381.3 1180.2L2380.1 1185.3L2376.6 1190.8L2375.4 1197.4L2368.8 1197.8L2363.0 1194.7L2357.1 1193.9L2352.0 1192.7L2351.3 1188.1L2347.4 1184.5L2347.0 1179.5ZM2294.0 1160.3L2302.6 1161.9L2307.6 1167.8L2314.2 1173.6L2318.1 1176.0L2323.2 1181.4L2326.7 1186.1L2329.8 1189.6L2335.7 1194.7L2335.3 1204.8L2330.2 1205.2L2321.3 1197.8L2316.2 1192.3L2312.3 1186.1L2309.2 1180.6L2306.5 1175.6L2301.4 1170.5L2297.5 1166.2ZM2332.6 1208.8L2336.9 1205.6L2344.6 1206.8L2353.2 1209.2L2361.4 1209.2L2368.8 1212.3L2368.8 1216.2L2359.1 1214.6L2351.3 1213.5L2337.6 1211.1ZM2371.5 1214.3L2386.3 1214.3L2401.9 1214.6L2409.7 1213.5L2417.5 1215.0L2407.8 1219.4L2398.0 1222.1L2390.2 1219.4L2378.5 1217.4L2372.7 1216.6ZM2388.3 1203.7L2387.5 1195.9L2385.6 1193.1L2388.3 1186.1L2389.5 1180.2L2393.4 1177.5L2401.9 1178.3L2407.8 1176.3L2410.5 1176.0L2407.0 1179.9L2400.0 1180.2L2392.2 1180.6L2396.1 1185.7L2403.5 1185.3L2396.1 1189.6L2401.2 1199.8L2396.1 1200.9L2393.7 1193.9L2391.8 1204.1ZM2419.5 1174.8L2423.4 1177.5L2423.4 1184.2L2420.6 1182.2ZM2433.1 1187.7L2439.0 1184.2L2444.8 1185.7L2448.7 1194.7L2458.4 1188.1L2468.2 1191.6L2472.1 1192.3L2483.8 1197.0L2490.8 1201.7L2497.4 1206.4L2496.2 1211.5L2501.3 1216.6L2507.1 1222.5L2505.2 1223.3L2495.5 1221.7L2491.6 1215.4L2483.8 1212.3L2481.8 1217.4L2477.9 1218.6L2472.1 1217.8L2466.2 1214.3L2460.4 1214.6L2459.6 1203.7L2450.6 1199.4L2440.9 1197.8L2437.0 1193.1L2440.1 1191.2L2435.8 1188.4ZM2501.3 1203.7L2507.1 1202.9L2513.0 1198.6L2516.1 1199.0L2514.2 1203.7L2505.2 1206.8ZM2364.9 1269.4L2364.9 1279.7L2366.9 1288.0L2370.8 1300.6L2370.8 1310.1L2373.5 1317.9L2370.8 1321.4L2381.7 1324.9L2390.2 1320.1L2403.9 1319.6L2413.6 1312.7L2425.3 1310.1L2434.3 1309.2L2445.6 1315.3L2451.8 1323.6L2454.5 1320.1L2459.6 1314.0L2458.8 1324.5L2462.3 1323.6L2466.2 1328.5L2468.2 1335.6L2474.0 1339.7L2481.8 1341.5L2487.7 1339.2L2492.7 1342.9L2498.6 1337.4L2507.1 1335.6L2507.9 1327.6L2512.2 1319.2L2516.9 1311.4L2519.2 1302.8L2521.2 1295.1L2519.2 1285.1L2514.9 1279.7L2510.3 1271.4L2504.0 1265.3L2500.5 1262.0L2493.1 1256.8L2491.2 1249.1L2488.8 1241.1L2485.7 1237.9L2482.2 1236.4L2481.8 1231.2L2477.9 1224.1L2475.2 1231.2L2474.4 1239.1L2473.6 1247.1L2470.5 1251.1L2465.5 1250.3L2459.6 1245.9L2450.6 1240.3L2452.6 1235.2L2455.7 1230.0L2450.6 1229.2L2442.8 1228.0L2437.0 1226.5L2431.2 1226.8L2429.2 1232.4L2426.9 1240.7L2421.4 1241.1L2417.5 1237.2L2411.7 1239.1L2407.8 1245.1L2403.9 1249.9L2398.8 1253.2L2394.1 1259.6L2385.6 1262.5L2378.5 1263.7L2374.7 1264.9L2368.8 1268.6ZM2486.5 1350.2L2493.5 1352.1L2500.5 1351.2L2499.4 1358.6L2495.5 1363.4L2491.6 1363.4L2488.4 1357.2ZM2595.6 1321.8L2599.9 1325.4L2603.8 1332.0L2607.7 1333.4L2610.4 1337.0L2618.2 1336.5L2614.3 1342.4L2611.6 1346.1L2608.5 1351.6L2604.2 1353.5L2605.4 1348.4L2599.9 1343.8L2603.0 1340.2L2602.6 1333.4L2596.8 1325.8ZM2595.6 1349.3L2601.8 1353.0L2599.9 1357.7L2596.0 1363.8L2590.9 1366.7L2589.0 1370.5L2587.0 1374.9L2581.2 1378.3L2571.5 1375.4L2572.6 1372.0L2578.5 1365.7L2587.0 1361.0L2590.9 1355.4ZM2234.0 1143.9L2237.1 1145.4L2241.4 1152.9L2240.2 1158.0L2236.3 1159.2L2233.6 1155.6ZM1954.6 1012.8L1960.8 1012.3L1960.0 1021.1L1955.7 1022.4L1955.3 1017.4ZM1956.1 1003.9L1959.6 1003.4L1959.6 1010.4L1956.9 1010.4ZM1970.9 1026.1L1983.4 1025.2L1981.4 1032.4L1978.3 1031.0L1971.3 1028.3ZM2014.2 1037.3L2025.1 1038.6L2023.9 1039.9L2014.6 1039.0ZM2048.5 1039.9L2057.4 1036.8L2055.1 1041.2L2049.3 1041.7ZM2130.3 1132.8L2135.0 1132.8L2133.8 1134.0L2131.5 1134.0ZM1236.7 959.8L1252.3 957.8L1267.9 953.6L1275.7 948.8L1272.6 952.0L1260.1 955.7L1246.5 959.3L1234.8 960.9ZM1322.5 926.2L1328.3 926.2L1329.5 930.2L1322.5 933.0ZM1422.2 965.0L1433.5 967.6L1442.1 977.2L1437.4 976.2L1425.7 968.6ZM1404.3 947.2L1409.4 948.8L1410.1 957.8L1404.3 952.0ZM1963.5 929.1L1967.4 937.4L1971.3 937.4L1970.5 942.9L1965.5 941.8ZM1683.7 1401.4L1690.7 1402.0L1697.4 1403.5L1694.6 1406.6L1686.8 1406.1ZM1774.5 1416.2L1782.3 1417.2L1783.1 1420.5L1776.5 1418.8ZM1314.7 1102.4L1319.3 1105.2L1315.4 1107.6L1314.3 1104.4ZM2613.5 1250.7L2618.6 1249.9L2618.2 1254.0L2613.9 1253.6ZM2561.7 1262.0L2565.6 1264.5L2573.4 1270.6L2570.3 1270.6L2562.5 1264.5ZM2572.6 1241.1L2575.0 1241.9L2578.5 1247.5L2577.3 1248.3L2573.0 1244.3ZM2532.5 1208.0L2536.4 1211.1L2544.2 1214.6L2549.2 1219.4L2552.0 1222.1L2545.3 1220.1L2537.5 1215.0L2532.9 1211.1Z" fill="#e0e0e0" stroke="#c6c6c6" stroke-width="1.8" stroke-linejoin="round"/>
<path d="M2105.0 994.8L2111.6 990.0L2115.5 986.6L2123.3 984.1L2129.1 986.1L2129.9 992.4L2122.5 996.3L2122.1 1002.5L2127.6 1008.1L2128.4 1011.8L2132.6 1015.1L2129.5 1020.6L2133.0 1028.8L2124.5 1032.4L2117.4 1029.7L2113.6 1027.4L2115.1 1017.9L2115.9 1014.6L2112.0 1009.0L2107.7 1003.9ZM2047.3 1183.0L2054.3 1181.0L2055.5 1186.1L2053.1 1192.0L2048.5 1190.8L2045.7 1188.1ZM1563.7 985.6L1571.9 986.1L1579.7 981.7L1585.5 986.6L1592.9 986.6L1592.1 981.7L1587.5 975.2L1577.7 975.2L1573.4 979.2L1568.0 981.7ZM1580.4 1009.5L1583.6 1009.5L1586.3 1003.4L1586.3 996.3L1589.4 992.4L1592.1 990.0L1585.5 990.0L1581.2 992.9L1579.7 998.7L1580.4 1005.8ZM1601.1 1003.4L1604.2 996.3L1608.9 993.9L1605.0 988.5L1596.8 988.5L1593.3 990.0L1597.6 992.9L1598.0 997.7L1601.1 1001.0ZM1597.6 1009.5L1605.0 1010.4L1611.6 1007.2L1615.1 1003.9L1608.9 1005.3L1601.1 1008.1L1598.8 1007.6ZM1611.6 1002.0L1618.6 1001.5L1625.6 1001.0L1625.3 997.7L1620.6 998.7L1614.0 1000.6ZM2209.0 986.6L2214.9 988.0L2222.7 987.6L2230.5 986.1L2228.5 984.6L2218.8 985.1L2212.9 984.1Z" fill="#fff" stroke="#c6c6c6" stroke-width="1.8"/>
<path d="M1373.1 853.6L1373.1 913.0L1380.9 914.2L1386.8 919.4L1394.6 915.9L1402.7 924.0L1409.0 934.1L1416.0 937.9L1414.0 943.9M1442.1 974.2L1551.8 974.2L1551.8 972.3L1554.3 975.7L1560.2 976.2L1571.9 978.7L1578.1 977.7L1591.7 984.6L1593.7 986.6L1596.8 988.5L1601.5 992.4L1601.1 1003.4L1598.8 1008.1L1606.9 1006.7L1614.7 1004.4L1614.0 1001.5L1622.9 1000.6L1625.3 997.7L1630.3 994.3L1644.0 993.9L1647.1 991.9L1649.8 985.6L1652.9 981.9L1658.4 983.6L1658.4 990.5L1661.5 994.8M1466.3 1050.9L1475.6 1050.0L1475.2 1050.9L1490.0 1055.9L1500.9 1055.9L1500.9 1054.0L1507.6 1054.0L1514.6 1060.8L1519.7 1065.9L1523.5 1062.5L1527.4 1062.5L1534.8 1072.2L1538.7 1077.7L1543.8 1078.9M1563.3 1125.3L1563.7 1122.9L1565.2 1118.9L1570.3 1118.9L1566.4 1114.3L1568.1 1114.3L1575.2 1112.1L1578.5 1109.2M1575.2 1112.1L1575.0 1119.7M1571.5 1128.4L1574.4 1125.6L1580.4 1129.6M1574.4 1125.6L1578.9 1120.5M1582.4 1131.6L1587.5 1127.6L1591.4 1124.9L1598.4 1123.3M1588.6 1138.7L1596.6 1139.5M1599.3 1150.0L1600.7 1144.6M1621.2 1148.4L1619.0 1154.1M1643.2 1104.4L1643.2 1110.8M1642.0 1136.8L1640.1 1138.7L1640.5 1143.1L1638.1 1146.2L1640.5 1150.1L1640.5 1153.3L1645.9 1154.9L1649.8 1155.2L1652.1 1158.4L1659.6 1157.6L1658.8 1161.9L1658.4 1164.6L1660.3 1169.3L1658.4 1171.3L1661.9 1177.5M1688.8 1149.0L1686.1 1152.9L1687.6 1154.9L1684.1 1156.0L1683.3 1159.2L1686.1 1161.9M1700.1 1158.8L1697.7 1169.3L1702.4 1174.8M1712.2 1159.9L1710.2 1166.2L1711.8 1174.0M1721.5 1165.8L1716.4 1173.6L1711.8 1174.0L1702.4 1174.8L1694.6 1177.1L1690.3 1173.6L1688.4 1164.6L1686.1 1161.9L1677.9 1166.6L1670.9 1166.2L1673.2 1174.8L1661.9 1177.5L1651.4 1177.9L1652.1 1187.3L1650.2 1198.6M1650.2 1198.6L1638.5 1202.9L1634.6 1210.7L1640.1 1219.4L1647.9 1219.4L1647.9 1225.3M1651.8 1225.3L1654.5 1225.3L1665.4 1220.5L1668.1 1224.9L1672.0 1231.2L1684.1 1235.2L1686.8 1241.1L1695.8 1246.3L1698.1 1254.0M1698.1 1254.0L1697.4 1263.7L1705.5 1271.4L1707.1 1277.6L1709.8 1284.2M1709.8 1284.2L1712.9 1290.5L1705.1 1295.1L1698.1 1303.6M1698.1 1303.6L1704.4 1306.6L1714.5 1318.8M1698.1 1303.6L1695.8 1315.3L1695.0 1320.1M1614.7 1176.3L1620.6 1179.1L1629.2 1182.6M1629.2 1182.6L1628.0 1188.4L1619.0 1193.9L1614.7 1201.7L1609.7 1195.5M1629.2 1182.6L1635.8 1187.3L1642.0 1191.6L1649.8 1193.1L1650.2 1198.6M1651.8 1225.3L1652.5 1242.3L1651.4 1251.1M1651.4 1251.1L1648.3 1254.4M1651.4 1251.1L1655.7 1258.8L1656.8 1267.3L1661.1 1272.3M1661.1 1272.3L1666.6 1269.8L1672.0 1272.7L1677.9 1269.4L1682.2 1261.2L1692.7 1258.4L1695.8 1260.4L1698.1 1254.0M1677.9 1269.4L1690.7 1277.6L1697.4 1283.8L1709.8 1284.2M1661.1 1272.3L1656.4 1279.7L1655.7 1290.1L1651.0 1302.8L1649.8 1315.7L1647.9 1328.9L1645.1 1342.4L1642.4 1356.3L1643.2 1368.1L1642.0 1380.3L1636.6 1392.8L1640.8 1402.0L1652.9 1406.6M1655.3 1408.7L1655.3 1421.0M1915.6 1039.5L1917.9 1052.6L1908.2 1057.3L1888.7 1067.6M1888.7 1067.6L1888.7 1073.1L1903.9 1082.7L1899.2 1101.1L1901.2 1117.7L1877.8 1121.3L1875.1 1124.9M1888.7 1073.1L1875.8 1078.5L1875.8 1088.9L1871.9 1097.9L1856.4 1097.9M1903.9 1082.7L1927.3 1099.1L1939.0 1106.4L1945.2 1105.6L1969.4 1088.9M1955.3 1031.0L1954.9 1041.7L1951.8 1047.4L1958.1 1052.6L1959.6 1060.8L1961.6 1081.4L1969.0 1086.8L1969.4 1088.9M1966.2 1047.8L1959.6 1060.8M2020.0 1054.8L2020.0 1095.0L2044.6 1095.0L2066.4 1095.0M2020.0 1095.0L2020.0 1103.2L2016.1 1105.2L1984.6 1089.3L1977.5 1093.0L1969.4 1088.9M1984.6 1089.3L1983.0 1101.1L1976.8 1125.7L1977.9 1133.2M2016.1 1105.2L2015.7 1120.5L2009.5 1131.2L2010.3 1139.1L2014.2 1145.0L2020.0 1152.9L2029.4 1162.3M1939.0 1106.4L1939.4 1116.1L1936.6 1121.3L1923.4 1123.7L1920.3 1122.9L1914.8 1124.9L1910.5 1129.2L1905.8 1132.4L1901.6 1141.5M1936.6 1136.4L1940.1 1128.4L1949.9 1130.0L1960.8 1132.0L1970.1 1131.2L1975.6 1128.4M1933.1 1157.2L1933.1 1146.6L1936.6 1136.4L1931.2 1132.8L1923.4 1123.7M1956.1 1164.6L1959.6 1157.2L1968.2 1154.9L1970.1 1149.0L1976.4 1139.1L1977.9 1133.2L1975.6 1128.4M1977.9 1133.2L1983.0 1143.5L1979.1 1149.0L1983.0 1152.9L1986.9 1152.1L1994.7 1147.0L2000.5 1147.0L2008.3 1139.9L2010.3 1139.1M1983.0 1152.9L1979.1 1158.8L1980.7 1166.6L1985.7 1173.6M1960.8 1173.2L1966.6 1173.6L1974.4 1173.6L1985.7 1173.6L1994.7 1166.6L2002.5 1165.4L2009.9 1166.6L2017.7 1162.3L2029.4 1162.3M2015.7 1148.6L2027.8 1144.6L2039.5 1141.9L2048.9 1134.8L2055.1 1145.0M2064.8 1126.1L2064.5 1137.9L2056.3 1141.9L2055.1 1145.0M2064.8 1126.1L2072.6 1125.3L2078.5 1125.3L2085.1 1132.0L2090.2 1133.6M2055.1 1145.0L2052.0 1150.9L2060.2 1160.7L2055.1 1165.8L2053.5 1168.2L2043.4 1167.8L2041.5 1168.2L2029.4 1162.3M2060.2 1160.7L2068.7 1165.4L2077.7 1167.4L2085.9 1167.0L2094.1 1163.1L2098.0 1162.7L2108.9 1150.9L2094.1 1147.0L2089.4 1139.1M2085.9 1167.0L2082.4 1171.3L2082.4 1188.8M2055.1 1165.8L2059.0 1176.3L2055.1 1186.1L2069.1 1193.9L2075.8 1200.5M2041.5 1168.2L2044.2 1173.6L2038.0 1184.5L2037.6 1193.1L2041.5 1191.6L2042.6 1186.1L2055.1 1186.1M2036.4 1193.9L2041.5 1214.3L2042.2 1214.6M1970.1 1204.8L1986.9 1205.6L1990.8 1213.5L1998.6 1211.5L2007.6 1210.7L2008.3 1225.3L2016.1 1227.2L2016.1 1224.9L2023.1 1228.0L2028.6 1227.6L2033.7 1219.4L2034.1 1215.4L2042.2 1214.6M1985.7 1173.6L1990.8 1186.1L1986.1 1192.0L1983.0 1199.0L1970.1 1204.8M1966.6 1173.6L1973.3 1178.3L1978.3 1190.0L1969.0 1197.0L1965.9 1197.4M1968.6 1250.3L1976.8 1248.7L1994.7 1251.1L2004.4 1253.2L2013.8 1251.5M2008.3 1233.2L2008.3 1245.9L2013.8 1251.5M2004.4 1253.2L2004.4 1269.4L2000.5 1269.4L2000.5 1280.9L2000.5 1296.4L1986.9 1296.8M2000.5 1280.9L2012.2 1283.0L2022.0 1284.7L2027.8 1277.6L2037.2 1270.2L2044.6 1271.0M2021.2 1252.3L2023.9 1259.2L2031.7 1267.3L2037.2 1270.2M2013.8 1251.5L2021.2 1252.3L2027.8 1249.1L2034.8 1245.1L2041.1 1243.5L2051.2 1237.2L2050.4 1218.6L2042.2 1214.6M2041.1 1243.5L2050.8 1247.9L2049.3 1265.3L2044.6 1271.0L2047.3 1279.7L2050.8 1289.7M2051.2 1237.2L2057.0 1247.1L2059.8 1249.1L2061.3 1239.5L2057.4 1227.2L2068.7 1228.0L2080.0 1222.9M1858.3 1118.9L1868.0 1116.9L1875.1 1124.9L1878.2 1133.6M1857.5 1133.6L1869.2 1132.8L1878.2 1133.6L1885.6 1134.4L1889.9 1139.1L1891.8 1142.3M1870.8 1146.6L1879.0 1143.1L1882.5 1149.0L1889.5 1152.5L1893.4 1165.0M1891.8 1142.3L1901.6 1141.5L1911.7 1144.6L1910.1 1162.3M1911.7 1144.6L1911.7 1139.1L1923.0 1138.7L1924.5 1150.9L1927.3 1158.4M1926.1 1139.1L1928.8 1147.0L1929.6 1157.6M1923.0 1138.7L1926.5 1139.1L1931.2 1132.8M1887.9 1008.6L1890.6 1008.1L1896.9 1008.6L1895.7 1012.8L1894.9 1018.8L1893.4 1019.7L1894.2 1025.6L1893.8 1030.1M1915.6 1001.5L1922.6 1004.8L1928.4 1005.3L1935.1 1006.2M1932.3 963.5L1939.0 967.6L1941.3 969.1L1945.2 971.6L1947.5 971.6L1954.6 974.2L1952.2 981.2L1949.5 982.1L1946.0 987.1L1949.9 989.5L1948.3 993.9L1951.8 999.6M1935.8 962.4L1941.3 961.4L1945.6 964.0L1946.4 959.3L1949.9 957.8L1950.7 952.5M1945.6 964.0L1946.8 968.6L1947.5 971.6M1956.5 943.4L1961.2 943.9M1977.9 948.8L1979.5 955.7L1979.9 964.0L1981.1 964.0L1986.9 967.6L1995.9 971.6L2000.5 973.2L2010.7 973.7L2016.1 966.6L2014.6 961.4L2014.2 956.2L2015.7 948.8L2011.5 946.1L1998.6 946.1M1969.8 967.6L1975.2 965.5L1981.1 964.0M1969.8 967.6L1976.4 975.2L1981.1 974.2L1988.8 975.2L1995.9 971.6M1960.0 981.7L1972.9 981.2L1976.4 975.2M1952.2 981.2L1960.0 981.7L1963.5 984.6L1969.8 984.1L1976.0 986.6L1985.7 985.1M1949.9 989.5L1955.3 988.0L1957.7 990.0L1963.1 986.6M1988.8 979.2L1985.7 985.1M1988.8 979.2L1995.9 980.2L2002.5 976.7L2009.1 977.2L2011.8 979.7L2004.4 987.6L1996.6 989.5L1988.8 989.5L1985.7 985.1M1975.6 991.4L1981.8 991.4L1985.7 985.1M2011.8 979.7L2020.0 979.7L2026.3 978.2L2032.5 986.6L2032.5 991.4M2011.1 997.7L2020.0 1000.1L2030.5 998.7L2034.1 999.9M2004.4 987.6L2011.1 997.7L2010.3 1006.2L2011.8 1011.4M2011.8 1011.4L2018.1 1010.4L2024.3 1011.4L2026.3 1009.5L2031.7 1008.1M2000.5 1018.8L2003.3 1013.2L2011.8 1011.4M1998.2 1008.6L2002.9 1005.3L2010.3 1006.2M1988.8 989.5L1996.6 994.3L1999.0 1002.5L1994.7 1005.8M2014.6 961.4L2027.8 960.9L2041.5 962.4L2047.3 958.3L2055.1 957.2L2060.9 967.1L2070.7 969.6L2078.5 971.1L2077.3 980.2L2071.5 983.6M2015.7 948.8L2025.9 939.0L2032.5 936.3L2043.4 939.6L2047.3 949.3L2045.4 954.6L2047.3 958.3M2004.4 936.8L2025.9 939.0M2017.3 926.8L2029.4 929.1L2031.7 918.2M2032.5 936.3L2029.4 929.1M2030.9 911.8L2038.0 906.5L2045.4 897.5L2039.5 891.9L2039.5 881.2L2035.6 872.2L2036.8 864.9L2033.7 858.1L2035.6 853.3L2043.4 854.0M2016.1 879.3L2015.0 871.5L2014.6 862.2L2002.9 857.4M2002.9 857.4L2012.2 862.2L2020.0 858.1L2027.8 851.9L2035.6 853.3M1967.0 920.5L1971.3 911.8L1970.1 904.1L1971.7 896.9L1977.2 887.6L1979.1 878.0L1984.6 867.5L1992.7 861.5L2002.9 857.4M2078.5 1001.5L2088.2 1002.9L2096.0 1004.8L2104.6 1009.0L2112.0 1009.0M2084.3 1010.4L2092.1 1012.3L2098.0 1012.8L2104.6 1009.0M2092.1 1012.3L2097.2 1018.8L2094.1 1020.1M2097.2 1018.8L2103.8 1022.4L2109.7 1022.9L2113.2 1024.7M2063.7 1032.8L2070.7 1031.9L2078.5 1031.0L2087.4 1030.1L2095.2 1030.6L2097.2 1030.1L2094.1 1020.1M2087.4 1030.1L2082.4 1042.6L2074.6 1051.7L2066.0 1051.7L2061.3 1050.0M2074.6 1051.7L2096.8 1065.0L2103.8 1065.5L2109.7 1062.0M2097.2 1030.1L2099.9 1036.4L2101.9 1039.9L2099.5 1044.8L2103.8 1049.1L2108.9 1055.6L2109.7 1062.0M2061.3 1050.0L2062.5 1045.6L2064.1 1041.2M2060.9 1048.7L2060.9 1055.2L2059.0 1063.8M2066.0 1051.7L2066.8 1055.2L2070.7 1059.5L2068.7 1063.8L2059.0 1063.8M2090.2 1116.9L2096.0 1113.7L2105.8 1115.3L2125.2 1107.2L2139.7 1095.0M2125.2 1107.2L2129.5 1116.5M2139.7 1095.0L2138.9 1088.9L2141.6 1083.1M2139.7 1095.0L2127.2 1085.6M2161.1 1032.8L2158.0 1031.0L2152.5 1028.8L2146.3 1025.6L2136.9 1027.0L2132.6 1029.7M2161.1 1032.8L2158.4 1044.3L2159.9 1055.2L2163.0 1055.6L2166.9 1064.2L2169.3 1073.5L2165.4 1076.4L2162.7 1081.8M2163.0 1055.6L2181.8 1062.0L2182.1 1055.6L2192.7 1053.5L2196.9 1047.4L2199.7 1042.1L2201.6 1035.5L2212.9 1031.0M2161.1 1032.8L2174.0 1034.1L2181.8 1029.2L2186.8 1030.1L2195.4 1028.3L2201.2 1027.0L2214.5 1030.1M2129.1 1007.6L2140.4 1011.4L2140.8 993.9L2151.0 991.0L2160.3 996.7L2164.2 1001.0L2175.5 1000.1L2179.8 1003.9L2181.8 1008.6L2189.5 1013.7L2198.9 1006.7L2207.1 1005.8L2212.5 1003.4L2220.7 1003.4L2235.1 1007.6L2235.5 994.3L2244.1 991.4L2246.1 983.1L2255.8 983.6L2262.8 973.7M2140.4 1011.4L2145.1 1011.4L2151.0 1004.8L2158.4 1011.8L2163.8 1012.3L2173.6 1022.0L2181.8 1029.2M2189.5 1013.7L2199.3 1016.5L2207.1 1020.1L2210.6 1024.2L2214.5 1030.1M2235.1 1007.6L2226.6 1012.3L2217.2 1015.1L2210.6 1019.7M2114.3 987.6L2112.0 981.7L2105.8 974.2L2105.0 969.1L2112.0 965.5L2121.3 960.9L2135.0 966.6L2140.8 965.0L2150.6 964.5L2161.9 965.0L2160.3 958.8L2160.3 950.9L2164.2 948.2L2176.7 945.0L2191.5 941.2L2199.3 947.7L2207.1 950.9L2219.9 947.2L2225.8 952.0L2234.4 964.0L2246.1 964.0L2255.8 971.6L2262.8 973.7M2262.8 973.7L2273.3 966.6L2283.1 965.0L2290.1 966.6L2306.5 958.3L2320.1 962.4L2331.8 967.1L2345.4 972.7L2354.0 973.7L2359.1 971.6L2368.8 968.1L2377.4 969.6M2377.4 969.6L2389.5 968.1L2391.0 961.9L2396.9 956.2L2409.7 952.5L2417.5 955.7L2419.5 965.5L2427.3 972.2L2431.9 974.7L2433.1 980.7L2439.0 980.7L2444.8 977.7L2447.1 981.7L2441.3 993.4L2436.2 992.9L2433.1 994.3L2434.3 1003.4L2431.5 1006.2M2264.4 973.2L2272.2 979.7L2277.2 986.6L2285.0 993.9L2298.7 1004.8L2312.3 1005.3L2331.8 1009.5L2347.4 1005.8L2358.7 1000.1L2357.1 994.8L2366.9 994.8L2374.7 990.5L2381.7 986.1L2389.5 984.1L2384.4 979.7L2377.4 969.6M2407.0 1017.4L2413.6 1012.8L2421.4 1008.1L2428.0 1006.2L2431.5 1006.2M2414.0 1027.4L2417.5 1025.2L2423.0 1023.8M2343.9 1097.1L2338.4 1091.7L2333.3 1090.9L2325.9 1092.6L2320.9 1093.4L2318.5 1098.3L2312.7 1097.5L2308.0 1086.4L2302.9 1087.2L2303.7 1081.8L2307.2 1072.2L2302.9 1068.4L2296.7 1064.2L2288.9 1066.3L2281.1 1071.0L2272.2 1069.7L2269.0 1073.1L2265.9 1070.5L2257.7 1070.1L2249.9 1065.9L2242.2 1060.3L2232.4 1057.3L2229.7 1050.9L2226.6 1037.7L2222.7 1036.8L2218.0 1032.4L2214.5 1030.1M2234.7 1066.7L2238.3 1072.2L2248.0 1072.6L2255.8 1076.0L2265.9 1076.8L2266.3 1070.5M2188.4 1088.0L2197.3 1080.6L2193.8 1073.5L2196.9 1070.1L2202.8 1070.5L2209.8 1062.0L2213.3 1056.9L2214.9 1050.9L2222.7 1038.6L2226.6 1037.7M2269.4 1095.0L2268.3 1085.6L2265.9 1081.8L2272.6 1078.5L2281.1 1082.2L2283.1 1088.9L2282.3 1099.1M2282.3 1099.1L2283.5 1095.0L2286.2 1086.8L2291.3 1080.2L2294.0 1075.6L2300.6 1071.8L2302.9 1068.4M2305.3 1143.1L2309.2 1131.2L2306.5 1119.3L2303.3 1108.8L2312.3 1101.5L2317.0 1097.5M2312.7 1101.5L2316.2 1113.3L2322.0 1111.7L2330.6 1117.3L2333.7 1125.3L2324.0 1125.7L2322.0 1134.4M2320.9 1093.4L2327.9 1105.2L2335.7 1112.5L2341.5 1123.3L2341.5 1125.3L2335.7 1139.1L2329.8 1141.1M2333.7 1125.3L2341.5 1125.3M2312.7 1156.8L2320.5 1158.0M2349.7 1174.4L2359.1 1176.7L2368.8 1176.3L2372.7 1166.6L2381.3 1165.8M2472.1 1192.3L2472.1 1217.8M2407.8 1219.4L2410.1 1215.8" fill="none" stroke="#c6c6c6" stroke-width="1.5" stroke-linejoin="round"/>
<circle cx="1529.7" cy="1022.1" r="74.6" fill="rgba(72,160,74,.55)" stroke="rgba(55,145,58,.65)" stroke-width="2.2"/>
<circle cx="1529.8" cy="1022.4" r="22.3" fill="#b3735a" stroke="rgba(215,70,55,.8)" stroke-width="2"/>
<circle cx="1470.7" cy="918.2" r="10" fill="#74804c" stroke="rgba(80,110,50,.8)" stroke-width="1.6"/>
<circle cx="1522.6" cy="1086.3" r="10" fill="rgba(72,168,74,.5)" stroke="rgba(48,135,52,.7)" stroke-width="1.6"/>
<circle cx="1985.2" cy="897.9" r="10" fill="rgba(242,84,84,.55)" stroke="rgba(205,55,55,.7)" stroke-width="1.6"/>
<circle cx="2021.4" cy="900" r="10" fill="#74804c" stroke="rgba(80,110,50,.8)" stroke-width="1.6"/>
<circle cx="1954.7" cy="909.8" r="10" fill="rgba(72,168,74,.5)" stroke="rgba(48,135,52,.7)" stroke-width="1.6"/>
<circle cx="1957.1" cy="934.2" r="10" fill="rgba(72,168,74,.5)" stroke="rgba(48,135,52,.7)" stroke-width="1.6"/>
<circle cx="2009.7" cy="935.9" r="10" fill="rgba(242,84,84,.55)" stroke="rgba(205,55,55,.7)" stroke-width="1.6"/>
<circle cx="1888.1" cy="951.4" r="10" fill="#74804c" stroke="rgba(80,110,50,.8)" stroke-width="1.6"/>
<circle cx="1914.2" cy="955.9" r="10" fill="#74804c" stroke="rgba(80,110,50,.8)" stroke-width="1.6"/>
<circle cx="1945.7" cy="950.1" r="10" fill="#74804c" stroke="rgba(80,110,50,.8)" stroke-width="1.6"/>
<circle cx="1963.5" cy="956.6" r="10" fill="rgba(72,168,74,.5)" stroke="rgba(48,135,52,.7)" stroke-width="1.6"/>
<circle cx="1996.1" cy="951.9" r="10" fill="rgba(72,168,74,.5)" stroke="rgba(48,135,52,.7)" stroke-width="1.6"/>
<circle cx="1938.4" cy="965.2" r="10" fill="rgba(242,84,84,.55)" stroke="rgba(205,55,55,.7)" stroke-width="1.6"/>
<circle cx="1981.1" cy="970.1" r="10" fill="rgba(72,168,74,.5)" stroke="rgba(48,135,52,.7)" stroke-width="1.6"/>
<circle cx="1933.8" cy="984.8" r="10" fill="rgba(242,84,84,.55)" stroke="rgba(205,55,55,.7)" stroke-width="1.6"/>
<circle cx="1946.1" cy="985.6" r="10" fill="#74804c" stroke="rgba(80,110,50,.8)" stroke-width="1.6"/>
<circle cx="1972.2" cy="981.6" r="10" fill="#74804c" stroke="rgba(80,110,50,.8)" stroke-width="1.6"/>
<circle cx="1978.7" cy="988.9" r="10" fill="rgba(72,168,74,.5)" stroke="rgba(48,135,52,.7)" stroke-width="1.6"/>
<circle cx="1981.1" cy="998.7" r="10" fill="rgba(72,168,74,.5)" stroke="rgba(48,135,52,.7)" stroke-width="1.6"/>
<circle cx="1968.1" cy="1006.8" r="10" fill="rgba(72,168,74,.5)" stroke="rgba(48,135,52,.7)" stroke-width="1.6"/>
<circle cx="1915.4" cy="1019.1" r="10" fill="rgba(72,168,74,.5)" stroke="rgba(48,135,52,.7)" stroke-width="1.6"/>
<circle cx="2008.1" cy="1032.1" r="10" fill="rgba(242,84,84,.55)" stroke="rgba(205,55,55,.7)" stroke-width="1.6"/>
<circle cx="1891.4" cy="1048.4" r="10" fill="rgba(242,84,84,.55)" stroke="rgba(205,55,55,.7)" stroke-width="1.6"/>
<circle cx="2193.1" cy="975" r="10" fill="rgba(242,84,84,.55)" stroke="rgba(205,55,55,.7)" stroke-width="1.6"/>
<circle cx="2306.8" cy="1038.7" r="10" fill="#74804c" stroke="rgba(80,110,50,.8)" stroke-width="1.6"/>
<circle cx="2418.1" cy="1033.2" r="10" fill="#b16b58" stroke="rgba(192,65,52,.85)" stroke-width="1.6"/>
<circle cx="2457.4" cy="1034.1" r="10" fill="#b16b58" stroke="rgba(192,65,52,.85)" stroke-width="1.6"/>
<circle cx="2134.1" cy="1087.3" r="10" fill="#74804c" stroke="rgba(80,110,50,.8)" stroke-width="1.6"/>
<circle cx="2223.5" cy="1087.3" r="10" fill="rgba(242,84,84,.55)" stroke="rgba(205,55,55,.7)" stroke-width="1.6"/>
<circle cx="2280.3" cy="1093.7" r="10" fill="rgba(242,84,84,.55)" stroke="rgba(205,55,55,.7)" stroke-width="1.6"/>
<circle cx="2391.8" cy="1087.3" r="10" fill="#b16b58" stroke="rgba(192,65,52,.85)" stroke-width="1.6"/>
<circle cx="2394.1" cy="1116.6" r="10" fill="rgba(242,84,84,.55)" stroke="rgba(205,55,55,.7)" stroke-width="1.6"/>
<circle cx="2326" cy="1176.9" r="10" fill="#74804c" stroke="rgba(80,110,50,.8)" stroke-width="1.6"/>
<circle cx="1608.9" cy="1185.7" r="10" fill="#b16b58" stroke="rgba(192,65,52,.85)" stroke-width="1.6"/>
<circle cx="1637.8" cy="1232.5" r="10" fill="rgba(242,84,84,.55)" stroke="rgba(205,55,55,.7)" stroke-width="1.6"/>
<circle cx="1714.1" cy="1215.4" r="10" fill="rgba(242,84,84,.55)" stroke="rgba(205,55,55,.7)" stroke-width="1.6"/>
<circle cx="1669.6" cy="1309.5" r="10" fill="rgba(72,168,74,.5)" stroke="rgba(48,135,52,.7)" stroke-width="1.6"/>
<circle cx="1640" cy="1414" r="10" fill="rgba(72,168,74,.5)" stroke="rgba(48,135,52,.7)" stroke-width="1.6"/>
<circle cx="1982.9" cy="1267.1" r="10" fill="rgba(72,168,74,.5)" stroke="rgba(48,135,52,.7)" stroke-width="1.6"/>
<circle cx="2007.4" cy="1307.2" r="10" fill="rgba(72,168,74,.5)" stroke="rgba(48,135,52,.7)" stroke-width="1.6"/>
<circle cx="2450.7" cy="1279.9" r="10" fill="#74804c" stroke="rgba(80,110,50,.8)" stroke-width="1.6"/>
<circle cx="2582.2" cy="1370.7" r="10" fill="rgba(242,84,84,.55)" stroke="rgba(205,55,55,.7)" stroke-width="1.6"/>
</svg>
<!-- table -->
<div class="sep" style="left:428.5px;top:1666px;width:2987.5px;background:#e2e2e2"></div>
<div class="a" style="left:2203px;top:1650px;width:219.5px;height:2px;background:#dadada"></div>
<div class="dot" style="left:464px;top:1636px;width:261px"></div>
<div class="dot" style="left:852.6px;top:1636px;width:93.4px"></div>
<svg class="a" style="left:1300px;top:1598px" width="40" height="36" viewBox="1300 1598 40 36">
 <path d="M1321.2 1603.5 V1627 M1309.7 1616.3 L1321.2 1627.8 L1332.7 1616.3" fill="none" stroke="#555" stroke-width="3"/>
</svg>
<div class="a" style="left:1010.8px;top:1740.7px;width:105px;height:56.6px;background:#f78b00;border-radius:28.3px"></div>
<div class="a" style="left:1065.5px;top:1747px;width:44px;height:44px;background:#fff;border-radius:22px"></div>
<div class="a" style="left:2213.8px;top:1707.6px;width:21.7px;height:116.2px;background:#3a8e3d"></div>
<div class="a" style="left:2213.8px;top:1707.6px;width:21.7px;height:26px;background:#d83131"></div>
<div class="a" style="left:2256.9px;top:1707.6px;width:21.7px;height:116.2px;background:#3a8e3d"></div>
<div class="a" style="left:2256.9px;top:1707.6px;width:21.7px;height:11px;background:#d83131"></div>
<div class="a" style="left:2300.1px;top:1707.6px;width:21.7px;height:116.2px;background:#3a8e3d"></div>
<div class="a" style="left:2300.1px;top:1707.6px;width:21.7px;height:2.5px;background:#d83131"></div>
<div class="a" style="left:2343.2px;top:1707.6px;width:21.7px;height:116.2px;background:#3a8e3d"></div>
<div class="a" style="left:2343.2px;top:1707.6px;width:21.7px;height:2.5px;background:#d83131"></div>
<div class="a" style="left:2386.4px;top:1707.6px;width:21.7px;height:116.2px;background:#3a8e3d"></div>
<div class="a" style="left:2429.5px;top:1707.6px;width:21.7px;height:116.2px;background:#3a8e3d"></div>
<div class="a" style="left:2472.6px;top:1707.6px;width:21.7px;height:116.2px;background:#3a8e3d"></div>
<div class="a" style="left:2515.8px;top:1707.6px;width:21.7px;height:116.2px;background:#3a8e3d"></div>
<div class="a" style="left:2558.9px;top:1707.6px;width:21.7px;height:116.2px;background:#3a8e3d"></div>
<div class="a" style="left:2602.1px;top:1707.6px;width:21.7px;height:116.2px;background:#3a8e3d"></div>
<div class="a" style="left:2645.2px;top:1707.6px;width:21.7px;height:116.2px;background:#3a8e3d"></div>
<div class="a" style="left:2688.3px;top:1707.6px;width:21.7px;height:116.2px;background:#3a8e3d"></div>
<div class="a" style="left:2731.5px;top:1707.6px;width:21.7px;height:116.2px;background:#3a8e3d"></div>
<div class="a" style="left:2774.6px;top:1707.6px;width:21.7px;height:116.2px;background:#3a8e3d"></div>
<div class="a" style="left:2817.8px;top:1707.6px;width:21.7px;height:116.2px;background:#3a8e3d"></div>
<div class="a" style="left:2860.9px;top:1707.6px;width:21.7px;height:116.2px;background:#3a8e3d"></div>
<div class="a" style="left:2904.0px;top:1707.6px;width:21.7px;height:116.2px;background:#3a8e3d"></div>
<div class="a" style="left:2947.2px;top:1707.6px;width:21.7px;height:116.2px;background:#3a8e3d"></div>
<div class="a" style="left:2990.3px;top:1707.6px;width:21.7px;height:116.2px;background:#3a8e3d"></div>
<div class="a" style="left:3033.5px;top:1707.6px;width:21.7px;height:116.2px;background:#3a8e3d"></div>
<div class="a" style="left:3076.6px;top:1707.6px;width:21.7px;height:116.2px;background:#3a8e3d"></div>
<div class="a" style="left:3076.6px;top:1707.6px;width:21.7px;height:9px;background:#d83131"></div>
<div class="a" style="left:3119.7px;top:1707.6px;width:21.7px;height:116.2px;background:#3a8e3d"></div>
<div class="a" style="left:3162.9px;top:1707.6px;width:21.7px;height:116.2px;background:#3a8e3d"></div>
<div class="a" style="left:3206.0px;top:1707.6px;width:21.7px;height:116.2px;background:#3a8e3d"></div>
<div class="a" style="left:3249.2px;top:1707.6px;width:21.7px;height:116.2px;background:#3a8e3d"></div>
<div class="a" style="left:3292.3px;top:1707.6px;width:21.7px;height:116.2px;background:#3a8e3d"></div>
<div class="a" style="left:3335.4px;top:1707.6px;width:21.7px;height:116.2px;background:#3a8e3d"></div>
<div class="a" style="left:3335.4px;top:1707.6px;width:21.7px;height:2.5px;background:#d83131"></div>
<div class="a" style="left:3378.6px;top:1707.6px;width:21.7px;height:116.2px;background:#3a8e3d"></div>
<div class="a" style="left:3378.6px;top:1707.6px;width:21.7px;height:2.5px;background:#d83131"></div>
<div class="a" style="left:2203px;top:1824px;width:1213px;height:2px;background:#d5dae4"></div>
<div class="a" style="left:349px;top:1826px;width:3142px;height:2px;background:#b4b4b4"></div>

<span class="t" style="left:565.0px;top:260.0px;font-size:37.62px;font-weight:700;color:#0d5f8f;transform:scaleX(0.9311);">All Sending</span>
<span class="t" style="left:837.6px;top:260.0px;font-size:37.62px;font-weight:700;color:#1e1e1e;transform:scaleX(0.9715);">demo-brand.com</span>
<span class="t" style="left:837.6px;top:293.5px;font-size:23.51px;font-weight:400;color:#6a6a6a;transform:scaleX(0.9141);">PRIMARY DOMAIN</span>
<span class="t" style="left:503.5px;top:409.8px;font-size:32.19px;font-weight:500;color:#242424;transform:scaleX(1.0134);-webkit-text-stroke:0.45px #242424;">Primary domain &amp; all sub-domains</span>
<span class="t" style="left:1127.7px;top:409.8px;font-size:32.19px;font-weight:500;color:#0d5f8f;transform:scaleX(1.0226);-webkit-text-stroke:0.45px #0d5f8f;">Reset filters</span>
<span class="t" style="left:3066.8px;top:411.5px;font-size:32.19px;font-weight:700;color:#0d5f8f;transform:scaleX(0.9615);">Summary</span>
<span class="t" style="left:3263.5px;top:411.5px;font-size:32.19px;font-weight:400;color:#747474;transform:scaleX(0.9996);">Detailed</span>
<span class="t" style="left:429.0px;top:497.5px;font-size:31.35px;font-weight:400;color:#2a2a2a;transform:scaleX(0.9843);">DMARC Domain</span>
<span class="t" style="left:429.0px;top:555.5px;font-size:43.89px;font-weight:400;color:#1f1f1f;transform:scaleX(1.0885);">demo-brand.com</span>
<span class="t" style="left:2480.0px;top:533.4px;font-size:32.19px;font-weight:500;color:#0d5f8f;transform:scaleX(0.9994);-webkit-text-stroke:0.45px #0d5f8f;">View DMARC record</span>
<span class="t" style="left:2847.0px;top:533.4px;font-size:32.19px;font-weight:500;color:#0d5f8f;transform:scaleX(0.9950);-webkit-text-stroke:0.45px #0d5f8f;">View SPF record</span>
<span class="t" style="left:3270.0px;top:532.5px;font-size:35.53px;font-weight:700;color:#2e8b3b;transform:scaleX(0.9410);">SET</span>
<span class="t" style="left:463.7px;top:687.0px;font-size:37.62px;font-weight:700;color:#1f1f1f;transform:scaleX(0.9469);">DMARC Compliance</span>
<span class="t" style="left:992.5px;top:689.0px;font-size:29.26px;font-weight:700;color:#ffffff;transform:scaleX(0.9350);">DIRECT</span>
<span class="t" style="left:722.0px;top:935.3px;font-size:39.71px;font-weight:400;color:#1a1a1a;transform:scaleX(1.0099);">97.97%</span>
<span class="t" style="left:464.5px;top:1193.5px;font-size:31.35px;font-weight:700;color:#1f1f1f;transform:scaleX(0.9623);">DIRECT VOLUME SENT</span>
<span class="t" style="left:993.5px;top:1193.5px;font-size:31.35px;font-weight:400;color:#212121;transform:scaleX(1.0458);">599,754</span>
<span class="t" style="left:464.5px;top:1271.0px;font-size:31.35px;font-weight:400;color:#212121;transform:scaleX(1.0240);">Compliant</span>
<span class="t" style="left:998.7px;top:1271.0px;font-size:31.35px;font-weight:400;color:#212121;transform:scaleX(1.0000);">587,598</span>
<span class="t" style="left:464.5px;top:1343.0px;font-size:31.35px;font-weight:400;color:#212121;transform:scaleX(1.0032);">Enforced Pass</span>
<span class="t" style="left:1094.6px;top:1343.0px;font-size:31.35px;font-weight:400;color:#212121;transform:scaleX(1.0000);">0</span>
<span class="t" style="left:464.5px;top:1415.0px;font-size:31.35px;font-weight:400;color:#212121;transform:scaleX(1.0000);">Pass</span>
<span class="t" style="left:998.7px;top:1415.0px;font-size:31.35px;font-weight:400;color:#212121;transform:scaleX(1.0000);">587,598</span>
<span class="t" style="left:464.5px;top:1487.0px;font-size:31.35px;font-weight:400;color:#212121;transform:scaleX(1.0000);">Fail</span>
<span class="t" style="left:1016.1px;top:1487.0px;font-size:31.35px;font-weight:400;color:#212121;transform:scaleX(1.0000);">12,156</span>
<span class="t" style="left:1219.0px;top:687.0px;font-size:37.62px;font-weight:700;color:#1f1f1f;transform:scaleX(0.9399);">Sending Origins</span>
<span class="t" style="left:2731.0px;top:665.5px;font-size:31.35px;font-weight:700;color:#1f1f1f;transform:scaleX(0.9629);">OTHER VOLUME SENT</span>
<span class="t" style="left:3283.1px;top:665.5px;font-size:31.35px;font-weight:400;color:#212121;transform:scaleX(1.0000);">18,145</span>
<span class="t" style="left:2731.0px;top:742.1px;font-size:31.35px;font-weight:400;color:#212121;transform:scaleX(1.0262);">Compliant</span>
<span class="t" style="left:3300.6px;top:742.1px;font-size:31.35px;font-weight:400;color:#212121;transform:scaleX(1.0000);">4,548</span>
<span class="t" style="left:2731.0px;top:814.3px;font-size:31.35px;font-weight:400;color:#212121;transform:scaleX(1.0000);">Fail</span>
<span class="t" style="left:3283.1px;top:814.3px;font-size:31.35px;font-weight:400;color:#212121;transform:scaleX(1.0000);">13,597</span>
<span class="t" style="left:2731.0px;top:886.5px;font-size:31.35px;font-weight:400;color:#212121;transform:scaleX(1.0188);">Probable Forwards</span>
<span class="t" style="left:3300.6px;top:886.5px;font-size:31.35px;font-weight:400;color:#212121;transform:scaleX(1.0000);">4,475</span>
<span class="t" style="left:2731.0px;top:997.9px;font-size:31.35px;font-weight:700;color:#1f1f1f;transform:scaleX(0.9700);">TOTAL VOLUME SENT</span>
<span class="t" style="left:3265.7px;top:997.9px;font-size:31.35px;font-weight:400;color:#212121;transform:scaleX(1.0000);">617,899</span>
<span class="t" style="left:2731.0px;top:1074.5px;font-size:31.35px;font-weight:400;color:#212121;transform:scaleX(1.0262);">Compliant</span>
<span class="t" style="left:3265.7px;top:1074.5px;font-size:31.35px;font-weight:400;color:#212121;transform:scaleX(1.0000);">592,146</span>
<span class="t" style="left:2731.0px;top:1146.5px;font-size:31.35px;font-weight:400;color:#212121;transform:scaleX(1.0000);">Fail</span>
<span class="t" style="left:3283.1px;top:1146.5px;font-size:31.35px;font-weight:400;color:#212121;transform:scaleX(1.0000);">25,753</span>
<span class="t" style="left:2731.0px;top:1218.5px;font-size:31.35px;font-weight:400;color:#212121;transform:scaleX(1.0000);">Direct</span>
<span class="t" style="left:3265.7px;top:1218.5px;font-size:31.35px;font-weight:400;color:#212121;transform:scaleX(1.0000);">599,754</span>
<span class="t" style="left:2731.0px;top:1290.5px;font-size:31.35px;font-weight:400;color:#212121;transform:scaleX(1.0000);">Other</span>
<span class="t" style="left:3283.1px;top:1290.5px;font-size:31.35px;font-weight:400;color:#212121;transform:scaleX(1.0000);">18,145</span>
<span class="t" style="left:2731.0px;top:1362.5px;font-size:31.35px;font-weight:400;color:#212121;transform:scaleX(1.0211);">Probable Forwards</span>
<span class="t" style="left:3283.1px;top:1362.5px;font-size:31.35px;font-weight:400;color:#212121;transform:scaleX(1.0000);">24,013</span>
<span class="t" style="left:2731.0px;top:1434.5px;font-size:31.35px;font-weight:400;color:#212121;transform:scaleX(1.0298);">Suspected Spoofs</span>
<span class="t" style="left:3300.6px;top:1434.5px;font-size:31.35px;font-weight:400;color:#1b6a9a;transform:scaleX(1.0000);text-decoration:underline;text-decoration-thickness:2px;text-underline-offset:4px;">8,285</span>
<span class="t" style="left:464.0px;top:1616.5px;font-size:31.35px;font-weight:400;color:#212121;transform:scaleX(1.0383);">Sending System</span>
<span class="t" style="left:852.6px;top:1616.5px;font-size:31.35px;font-weight:400;color:#212121;transform:scaleX(1.0511);">Status</span>
<span class="t" style="left:1187.5px;top:1616.5px;font-size:31.35px;font-weight:400;color:#212121;transform:scaleX(0.9852);">Volume</span>
<span class="t" style="left:1419.0px;top:1616.5px;font-size:31.35px;font-weight:400;color:#212121;transform:scaleX(1.0276);">Compliant</span>
<span class="t" style="left:1692.7px;top:1616.5px;font-size:31.35px;font-weight:400;color:#212121;transform:scaleX(0.9991);">Failed</span>
<span class="t" style="left:1906.0px;top:1616.5px;font-size:31.35px;font-weight:400;color:#212121;transform:scaleX(1.0198);">Compliance</span>
<span class="t" style="left:2238.0px;top:1614.0px;font-size:31.35px;font-weight:400;color:#212121;transform:scaleX(0.9928);">Daily by %</span>
<span class="t" style="left:464.0px;top:1769.5px;font-size:31.35px;font-weight:700;color:#0d5f8f;transform:scaleX(0.9879);">HubSpot</span>
<span class="t" style="left:852.6px;top:1769.5px;font-size:31.35px;font-weight:400;color:#212121;transform:scaleX(0.9205);">DIRECT</span>
<span class="t" style="left:1231.0px;top:1769.5px;font-size:31.35px;font-weight:400;color:#212121;transform:scaleX(1.0325);">547,406</span>
<span class="t" style="left:1505.0px;top:1769.5px;font-size:31.35px;font-weight:400;color:#212121;transform:scaleX(1.0325);">543,916</span>
<span class="t" style="left:1751.0px;top:1769.5px;font-size:31.35px;font-weight:400;color:#212121;transform:scaleX(1.0709);">3,490</span>
<span class="t" style="left:2024.0px;top:1769.5px;font-size:31.35px;font-weight:400;color:#212121;transform:scaleX(1.0065);">99.36%</span>
</body></html>
